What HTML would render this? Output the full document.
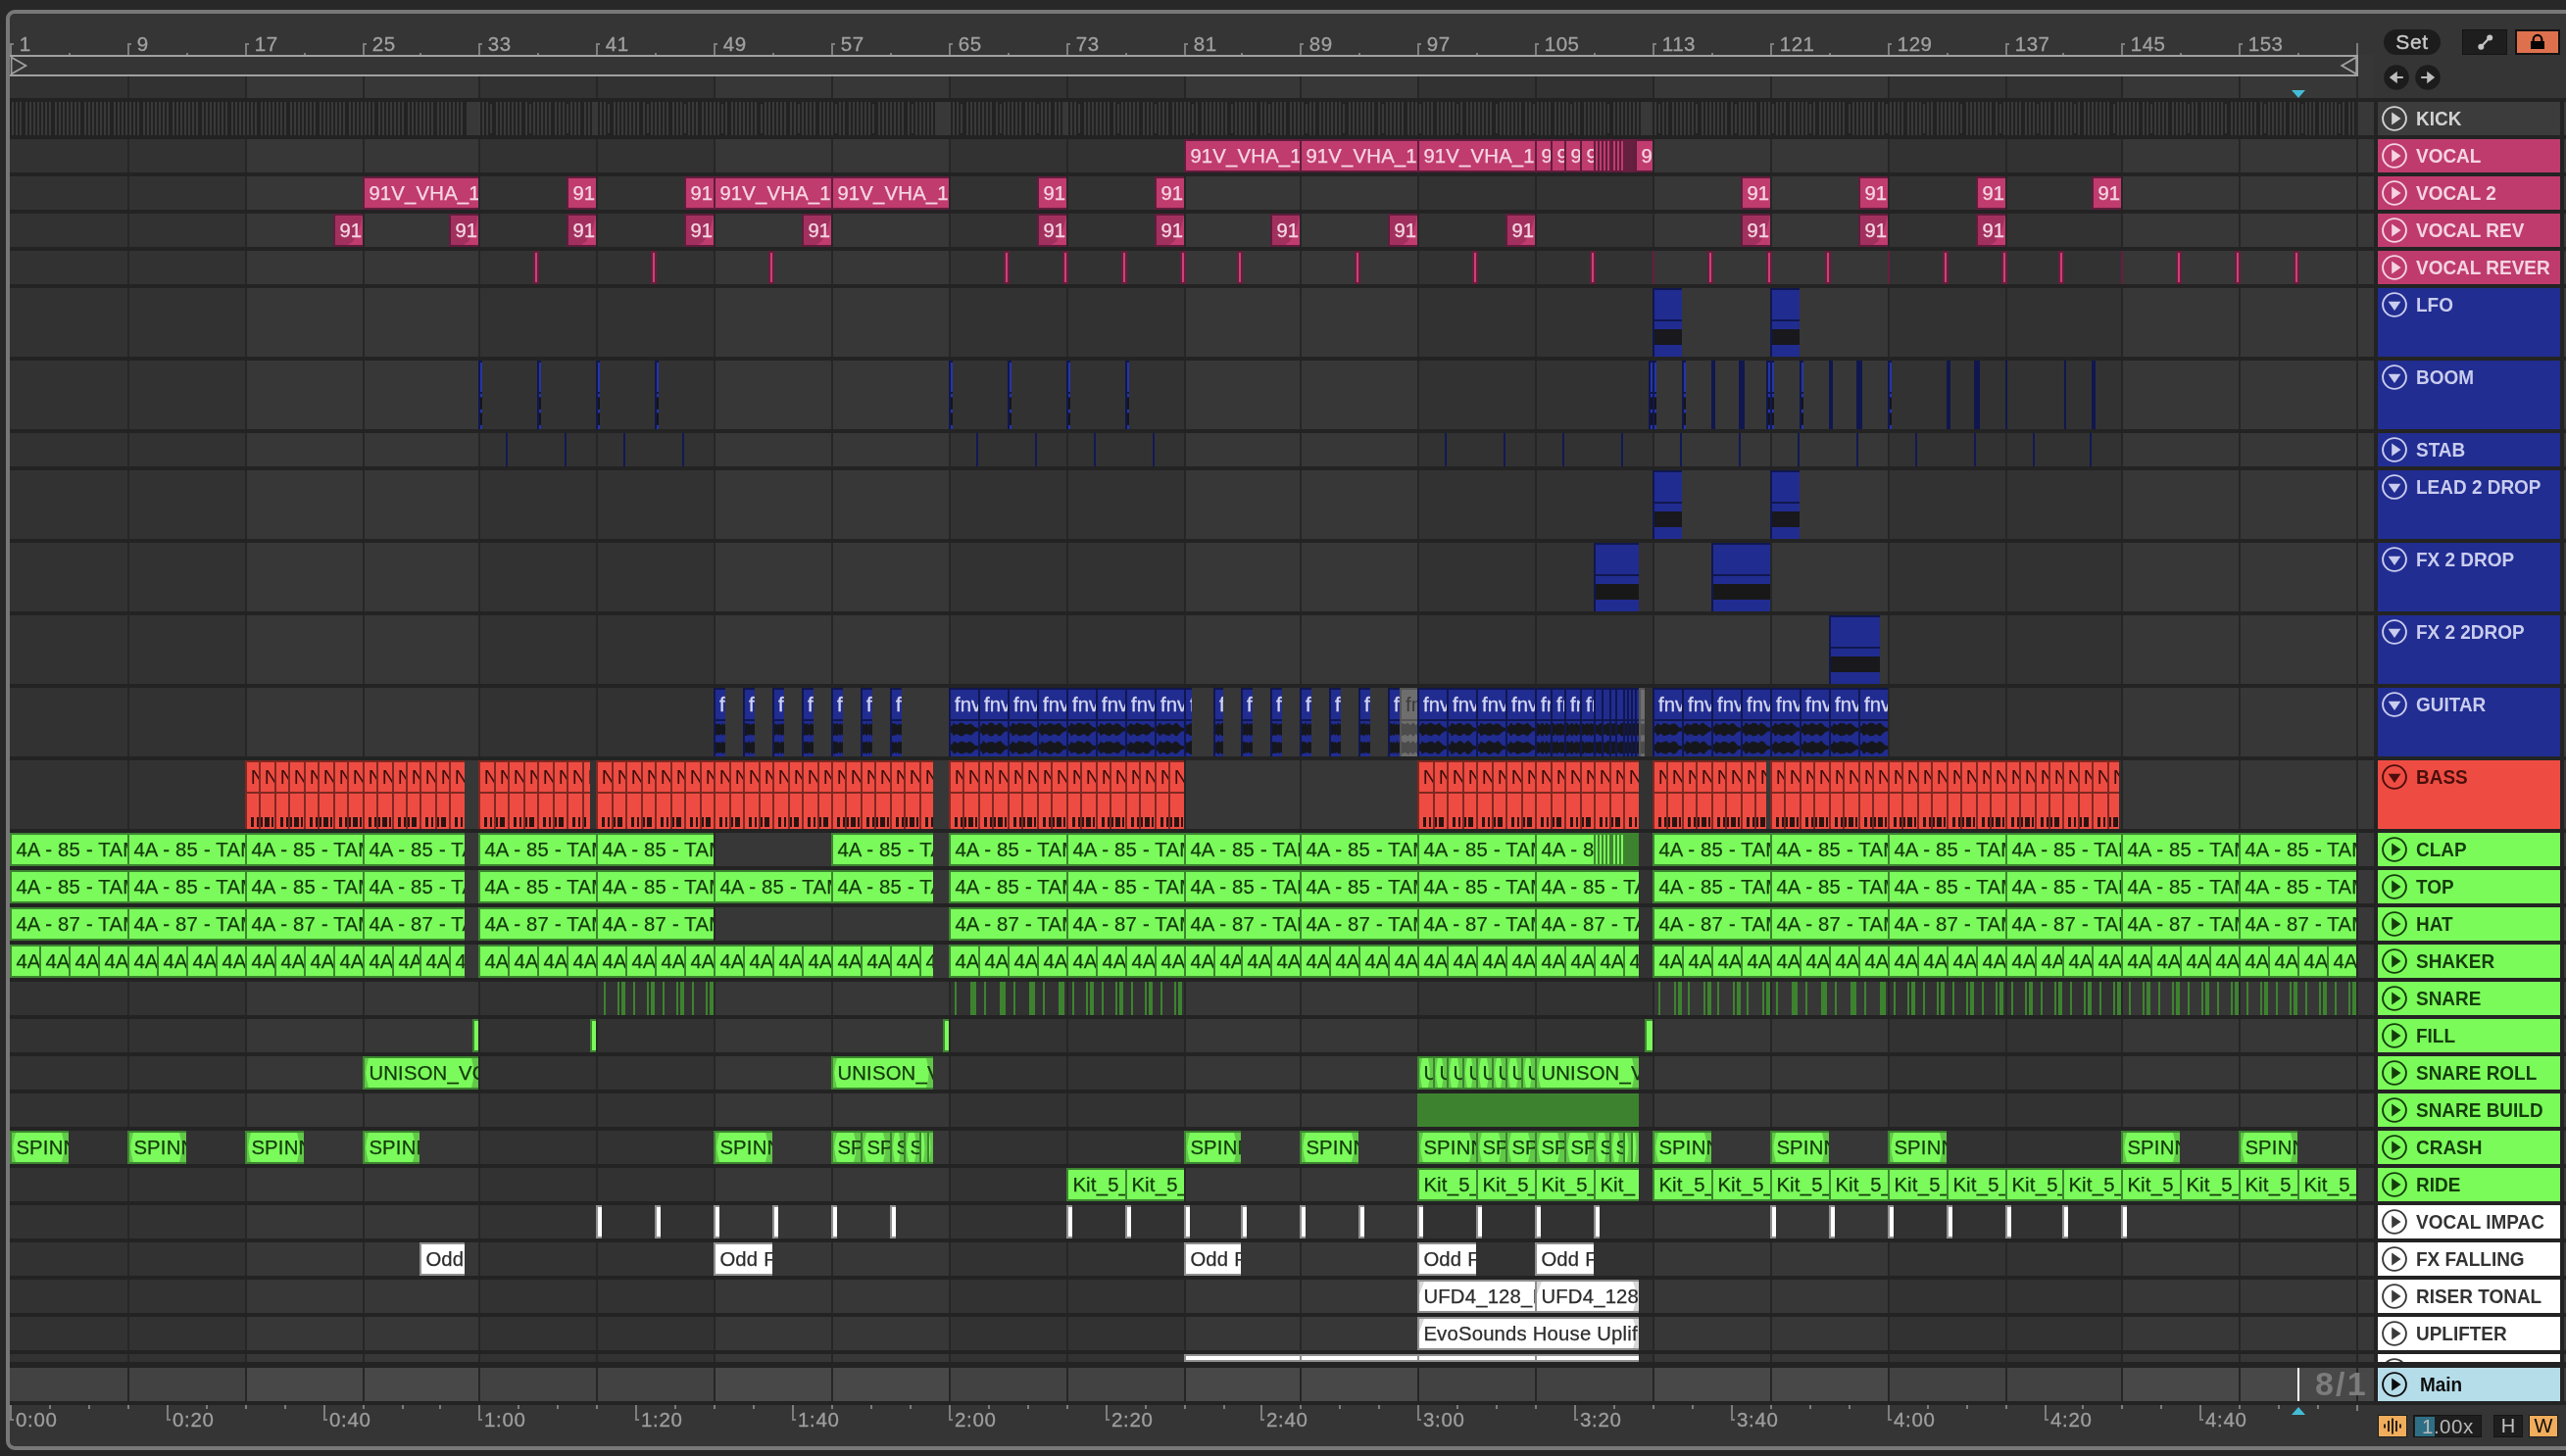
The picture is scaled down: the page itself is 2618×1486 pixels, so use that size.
<!DOCTYPE html><html><head><meta charset="utf-8"><title>Arrangement</title><style>
*{margin:0;padding:0}
html,body{width:2618px;height:1486px;overflow:hidden;background:#282828}
body{position:relative;font-family:"Liberation Sans",sans-serif}
div,i,b,u,s,svg{position:absolute;display:block}
#all{left:0;top:0;width:2618px;height:1486px;will-change:transform;overflow:hidden}
#fr{left:6px;top:10px;width:2640px;height:1470px;box-sizing:border-box;border:4px solid #787878;border-radius:9px;background:#353535}
.band{top:78px;height:1312px;background:#323232}
.band2{top:78px;height:1312px;background:#373737}
.gl8{top:78px;width:2px;height:1356px;background:#262626}
.sep{left:10px;width:2608px;height:4px;background:#232323}
.c{overflow:hidden;box-sizing:border-box;white-space:nowrap;font-size:20.3px;letter-spacing:.2px;line-height:30px;padding-left:4.4px;border:2px solid;border-right:0;-webkit-text-stroke:.25px}
.pk{background:#c03b6e;border-color:#5f1d3d;color:#f5d6e2}
.pkd{background:#651f3f;border-color:#651f3f}
.pkr{background:#a2305e;border-color:#5f1d3d;color:#f5d6e2}
.fd{left:0;top:0;width:100%;height:100%;background:#c03b6e;clip-path:polygon(100% 100%,46% 100%,64% 88%,80% 64%,92% 32%,100% 0);z-index:0}
.pkr,.gr,.wh{z-index:0}.pkr .fd{z-index:-1}
.pkt{width:6px;height:34px;background:#c94375;box-sizing:border-box;border:2px solid #681d3e}
.pkt2{width:2px;height:34px;background:#681d3e}
.kbg{background:#222}
.kick{background-color:#222;background-image:repeating-linear-gradient(90deg,#3c3c3c 0,#3c3c3c 1.9px,#222 1.9px,#222 3.74px)}
.kgap{background:#383838}
.mb{height:70px;background:#212c90;box-sizing:border-box;border-left:2px solid #10174f;border-top:2px solid #10174f;overflow:hidden}
.mb b{left:0;top:30px;width:100%;height:2px;background:#10174f}
.mb u{left:0;top:40px;width:100%;height:16px}
.bh{height:70px;background:#2636a6;box-sizing:border-box;border-left:2px solid #10174f;border-top:2px solid #10174f;overflow:hidden}
.bh b{left:0;top:30px;width:100%;height:2px;background:#10174f}
.bh s{left:-1px;top:35px;width:4px;height:13px;border-radius:50%;background:#14141c}
.bn{height:70px;background:#10174f}
.st{width:2px;height:34px;background:#121955}
.ga,.gg{height:70px;background:#212c90;box-sizing:border-box;border-left:2px solid #10174f;border-top:2px solid #10174f;overflow:hidden;white-space:nowrap}
.ga b,.gg b{left:4px;top:0;font-weight:normal;font-size:20.3px;letter-spacing:.1px;line-height:30px;color:#d3d6f2;-webkit-text-stroke:.35px #d3d6f2}
.ga:after,.gg:after{content:"";position:absolute;left:0;top:30px;width:100%;height:2px;background:#10174f}
.gg{background:#6e6e6e;border-color:#555}.gg b{color:#3a3a3a;-webkit-text-stroke:0}.gg:after{background:#555}
.wv{left:0;top:32px}
.ba{height:70px;background:#ee4c42;box-sizing:border-box;border-left:2px solid #7f2822;border-top:2px solid #7f2822;overflow:hidden}
.ba b{left:3.8px;top:0;font-weight:normal;font-size:20.3px;line-height:30px;color:#3c0d0a}
.ba:after{content:"";position:absolute;left:0;top:30px;width:100%;height:2px;background:#7f2822}
.ba i{top:56px;height:10px;background:#2a1411}
.gr{background:#7bfa5b;border-color:#3c8530;color:#133a0b}
.grd{background:#3d832f;border-color:#3d832f}
.grs{background:transparent;border:0;border-left:1px solid #3d8631}
.sn{height:34px;background:#3d832f}
.gl{left:0;top:0;width:4px;height:100%;background:#62c849;z-index:-1;clip-path:polygon(0 0,100% 0,55% 25%,30% 50%,55% 75%,100% 100%,0 100%)}
.gr2{right:0;top:0;width:7px;height:100%;background:#62c849;z-index:-1;clip-path:polygon(0 0,100% 0,100% 100%,0 100%,25% 75%,38% 50%,25% 25%)}
.wh{background:#fff;border-color:#8f8f8f;color:#2c2c2c}
.wl{left:0;top:0;width:5px;height:100%;background:#d8d8d8;z-index:-1;clip-path:polygon(0 0,100% 0,0 45%)}
.wr{right:0;top:0;width:6px;height:100%;background:#d8d8d8;z-index:-1;clip-path:polygon(0 0,100% 0,100% 100%,0 100%,40% 75%,60% 50%,40% 25%)}
.hd{left:2426px;width:186px;box-sizing:border-box;font-weight:bold;font-size:20.5px;line-height:34px;padding-left:38.5px;white-space:nowrap;overflow:hidden}.hd span{display:inline-block;transform:scaleX(.925);transform-origin:0 50%}
.hd svg{left:4px;top:4px}
.k{background:#3c3c3c;color:#d2d2d2}
.hpk{background:#bf3b6d;color:#f4d4e1}
.hbl{background:#212d91;color:#c9ccee}
.hrd{background:#ee4c42;color:#4a0f0c}
.hgr{background:#7bfb5a;color:#143d0c}
.hwh{background:#fff;color:#333}
.rl{top:33.3px;font-size:20.5px;line-height:24px;color:#a0a0a0;letter-spacing:.5px;-webkit-text-stroke:.3px}
.tl{top:1437px;font-size:20.5px;line-height:24px;color:#9e9e9e;letter-spacing:.7px;-webkit-text-stroke:.3px}
.tk{background:#a1a1a1}.tk2{background:#7d7d7d}
</style></head><body><div id="all">
<div id="fr"></div>
<div class="band" style="left:10px;width:240px"></div>
<div class="band2" style="left:250px;width:238px"></div>
<div class="band" style="left:488px;width:240px"></div>
<div class="band2" style="left:728px;width:240px"></div>
<div class="band" style="left:968px;width:240px"></div>
<div class="band2" style="left:1208px;width:238px"></div>
<div class="band" style="left:1446px;width:240px"></div>
<div class="band2" style="left:1686px;width:240px"></div>
<div class="band" style="left:1926px;width:238px"></div>
<div class="band2" style="left:2164px;width:240px"></div>
<div style="left:2406px;top:100px;width:16px;height:1334px;background:#383838"></div>
<div style="left:2422px;top:100px;width:4px;height:1334px;background:#232323"></div>
<div style="left:2612px;top:100px;width:4px;height:1334px;background:#232323"></div>
<div style="left:2616px;top:100px;width:2px;height:1334px;background:#3a3a3a"></div>
<div style="left:2406px;top:56px;width:16px;height:44px;background:#373737"></div>
<div style="left:10px;top:1396px;width:240px;height:34px;background:#424242"></div>
<div style="left:250px;top:1396px;width:238px;height:34px;background:#484848"></div>
<div style="left:488px;top:1396px;width:240px;height:34px;background:#424242"></div>
<div style="left:728px;top:1396px;width:240px;height:34px;background:#484848"></div>
<div style="left:968px;top:1396px;width:240px;height:34px;background:#424242"></div>
<div style="left:1208px;top:1396px;width:238px;height:34px;background:#484848"></div>
<div style="left:1446px;top:1396px;width:240px;height:34px;background:#424242"></div>
<div style="left:1686px;top:1396px;width:240px;height:34px;background:#484848"></div>
<div style="left:1926px;top:1396px;width:238px;height:34px;background:#424242"></div>
<div style="left:2164px;top:1396px;width:240px;height:34px;background:#484848"></div>
<div style="left:2406px;top:1396px;width:16px;height:34px;background:#474747"></div>
<div class="gl8" style="left:130px"></div>
<div class="gl8" style="left:250px"></div>
<div class="gl8" style="left:370px"></div>
<div class="gl8" style="left:488px"></div>
<div class="gl8" style="left:608px"></div>
<div class="gl8" style="left:728px"></div>
<div class="gl8" style="left:848px"></div>
<div class="gl8" style="left:968px"></div>
<div class="gl8" style="left:1088px"></div>
<div class="gl8" style="left:1208px"></div>
<div class="gl8" style="left:1326px"></div>
<div class="gl8" style="left:1446px"></div>
<div class="gl8" style="left:1566px"></div>
<div class="gl8" style="left:1686px"></div>
<div class="gl8" style="left:1806px"></div>
<div class="gl8" style="left:1926px"></div>
<div class="gl8" style="left:2046px"></div>
<div class="gl8" style="left:2164px"></div>
<div class="gl8" style="left:2284px"></div>
<div class="gl8" style="left:2404px"></div>
<div class="sep" style="top:100px"></div>
<div class="sep" style="top:138px"></div>
<div class="sep" style="top:176px"></div>
<div class="sep" style="top:214px"></div>
<div class="sep" style="top:252px"></div>
<div class="sep" style="top:290px"></div>
<div class="sep" style="top:364px"></div>
<div class="sep" style="top:438px"></div>
<div class="sep" style="top:476px"></div>
<div class="sep" style="top:550px"></div>
<div class="sep" style="top:624px"></div>
<div class="sep" style="top:698px"></div>
<div class="sep" style="top:772px"></div>
<div class="sep" style="top:846px"></div>
<div class="sep" style="top:884px"></div>
<div class="sep" style="top:922px"></div>
<div class="sep" style="top:960px"></div>
<div class="sep" style="top:998px"></div>
<div class="sep" style="top:1036px"></div>
<div class="sep" style="top:1074px"></div>
<div class="sep" style="top:1112px"></div>
<div class="sep" style="top:1150px"></div>
<div class="sep" style="top:1188px"></div>
<div class="sep" style="top:1226px"></div>
<div class="sep" style="top:1264px"></div>
<div class="sep" style="top:1302px"></div>
<div class="sep" style="top:1340px"></div>
<div class="sep" style="top:1378px"></div>
<div class="sep" style="top:1390px;height:6px"></div>
<div class="sep" style="top:1430px;height:4px"></div>
<div class="kbg" style="left:10px;top:100px;width:2394px;height:42px"></div>
<svg style="left:0;top:0" width="2410" height="140" viewBox="0 0 2410 140" shape-rendering="crispEdges"><path d="M13 104v34M17 104v34M21 104v34M27 104v34M31 104v34M35 104v34M39 104v34M43 104v34M47 104v34M51 104v34M57 104v34M61 104v34M65 104v34M69 104v34M73 104v34M77 104v34M81 104v34M87 104v34M91 104v34M95 104v34M99 104v34M103 104v34M107 104v34M111 104v34M117 104v34M121 104v34M125 104v34M129 104v34M133 104v34M137 104v34M141 104v34M147 104v34M151 104v34M155 104v34M159 104v34M163 104v34M167 104v34M171 104v34M177 104v34M181 104v34M185 104v34M189 104v34M193 104v34M197 104v34M201 104v34M207 104v34M211 104v34M215 104v34M219 104v34M223 104v34M227 104v34M231 104v34M237 104v34M241 104v34M245 104v34M249 104v34M253 104v34M257 104v34M261 104v34M267 104v34M271 104v34M275 104v34M279 104v34M283 104v34M287 104v34M291 104v34M297 104v34M301 104v34M305 104v34M309 104v34M313 104v34M317 104v34M321 104v34M327 104v34M331 104v34M335 104v34M339 104v34M343 104v34M347 104v34M351 104v34M357 104v34M361 104v34M365 104v34M369 104v34M373 104v34M377 104v34M381 104v34M387 104v34M391 104v34M395 104v34M399 104v34M403 104v34M407 104v34M411 104v34M417 104v34M421 104v34M425 104v34M429 104v34M433 104v34M437 104v34M441 104v34M447 104v34M451 104v34M455 104v34M459 104v34M463 104v34M467 104v34M471 104v34M489 104v34M493 104v34M497 104v34M501 106v30M507 104v34M511 104v34M515 104v34M519 104v34M523 104v34M527 104v34M531 104v34M537 104v34M541 106v30M545 104v34M549 104v34M553 104v34M557 104v34M561 104v34M567 104v34M571 104v34M575 104v34M579 106v30M583 104v34M587 104v34M591 104v34M597 104v34M601 104v34M609 104v34M613 104v34M617 104v34M621 106v30M627 104v34M631 104v34M635 104v34M639 104v34M643 104v34M647 104v34M651 104v34M657 104v34M661 106v30M665 104v34M669 104v34M673 104v34M677 104v34M681 104v34M687 104v34M691 104v34M695 104v34M699 106v30M703 104v34M707 104v34M711 104v34M717 104v34M721 104v34M725 104v34M729 104v34M733 104v34M737 106v30M741 104v34M747 104v34M751 104v34M755 104v34M759 104v34M763 104v34M767 104v34M771 104v34M777 106v30M781 104v34M785 104v34M789 104v34M793 104v34M797 104v34M801 104v34M807 104v34M811 104v34M815 106v30M819 104v34M823 104v34M827 104v34M831 104v34M837 104v34M841 104v34M845 104v34M849 104v34M853 106v30M857 104v34M861 104v34M867 104v34M871 104v34M875 104v34M879 104v34M883 104v34M887 104v34M891 106v30M897 104v34M901 104v34M905 104v34M909 104v34M913 104v34M917 104v34M921 104v34M927 104v34M931 106v30M935 104v34M939 104v34M943 104v34M947 104v34M951 104v34M969 104v34M973 104v34M977 104v34M981 106v30M987 104v34M991 104v34M995 104v34M999 104v34M1003 104v34M1007 104v34M1011 104v34M1017 104v34M1021 106v30M1025 104v34M1029 104v34M1033 104v34M1037 104v34M1041 104v34M1047 104v34M1051 104v34M1055 104v34M1059 106v30M1063 104v34M1067 104v34M1071 104v34M1077 104v34M1081 104v34M1089 104v34M1093 104v34M1097 104v34M1101 106v30M1107 104v34M1111 104v34M1115 104v34M1119 104v34M1123 104v34M1127 104v34M1131 104v34M1137 104v34M1141 106v30M1145 104v34M1149 104v34M1153 104v34M1157 104v34M1161 104v34M1167 104v34M1171 104v34M1175 104v34M1179 106v30M1183 104v34M1187 104v34M1191 104v34M1197 104v34M1201 104v34M1205 104v34M1209 104v34M1213 104v34M1217 106v30M1221 104v34M1227 104v34M1231 104v34M1235 104v34M1239 104v34M1243 104v34M1247 104v34M1251 104v34M1257 106v30M1261 104v34M1265 104v34M1269 104v34M1273 104v34M1277 104v34M1281 104v34M1287 104v34M1291 104v34M1295 106v30M1299 104v34M1303 104v34M1307 104v34M1311 104v34M1317 104v34M1321 104v34M1325 104v34M1329 104v34M1333 106v30M1337 104v34M1341 104v34M1347 104v34M1351 104v34M1355 104v34M1359 104v34M1363 104v34M1367 104v34M1371 106v30M1377 104v34M1381 104v34M1385 104v34M1389 104v34M1393 104v34M1397 104v34M1401 104v34M1407 104v34M1411 106v30M1415 104v34M1419 104v34M1423 104v34M1427 104v34M1431 104v34M1437 104v34M1441 104v34M1445 104v34M1449 106v30M1453 104v34M1457 104v34M1461 104v34M1467 104v34M1471 104v34M1475 104v34M1479 104v34M1483 104v34M1487 106v30M1491 104v34M1497 104v34M1501 104v34M1505 104v34M1509 104v34M1513 104v34M1517 104v34M1521 104v34M1527 106v30M1531 104v34M1535 104v34M1539 104v34M1543 104v34M1547 104v34M1551 104v34M1557 104v34M1561 104v34M1565 106v30M1569 104v34M1573 104v34M1577 104v34M1581 104v34M1587 104v34M1591 104v34M1595 104v34M1599 104v34M1603 106v30M1607 104v34M1611 104v34M1617 104v34M1621 104v34M1625 104v34M1629 104v34M1633 104v34M1637 104v34M1641 106v30M1647 104v34M1651 104v34M1655 104v34M1659 104v34M1663 104v34M1667 104v34M1671 104v34M1689 104v34M1693 106v30M1697 104v34M1701 104v34M1707 104v34M1711 104v34M1715 104v34M1719 104v34M1723 104v34M1727 104v34M1731 106v30M1737 104v34M1741 104v34M1745 104v34M1749 104v34M1753 104v34M1757 104v34M1761 104v34M1767 104v34M1771 106v30M1775 104v34M1779 104v34M1783 104v34M1787 104v34M1791 104v34M1797 104v34M1801 104v34M1805 104v34M1809 106v30M1813 104v34M1817 104v34M1821 104v34M1827 104v34M1831 104v34M1835 104v34M1839 104v34M1843 104v34M1847 106v30M1851 104v34M1857 104v34M1861 104v34M1865 104v34M1869 104v34M1873 104v34M1877 104v34M1881 104v34M1887 106v30M1891 104v34M1895 104v34M1899 104v34M1903 104v34M1907 104v34M1911 104v34M1917 104v34M1921 104v34M1925 106v30M1929 104v34M1933 104v34M1937 104v34M1941 104v34M1947 104v34M1951 104v34M1955 104v34M1959 104v34M1963 106v30M1967 104v34M1971 104v34M1977 104v34M1981 104v34M1985 104v34M1989 104v34M1993 104v34M1997 104v34M2001 106v30M2007 104v34M2011 104v34M2015 104v34M2019 104v34M2023 104v34M2027 104v34M2031 104v34M2037 104v34M2041 106v30M2045 104v34M2049 104v34M2053 104v34M2057 104v34M2061 104v34M2067 104v34M2071 104v34M2075 104v34M2079 106v30M2083 104v34M2087 104v34M2091 104v34M2097 104v34M2101 104v34M2105 104v34M2109 104v34M2113 104v34M2117 106v30M2121 104v34M2127 104v34M2131 104v34M2135 104v34M2139 104v34M2143 104v34M2147 104v34M2151 104v34M2157 106v30M2161 104v34M2165 104v34M2169 104v34M2173 104v34M2177 104v34M2181 104v34M2187 104v34M2191 104v34M2195 106v30M2199 104v34M2203 104v34M2207 104v34M2211 104v34M2217 104v34M2221 104v34M2225 104v34M2229 104v34M2233 106v30M2237 104v34M2241 104v34M2247 104v34M2251 104v34M2255 104v34M2259 104v34M2263 104v34M2267 104v34M2271 106v30M2277 104v34M2281 104v34M2285 104v34M2289 104v34M2293 104v34M2297 104v34M2301 104v34M2307 104v34M2311 106v30M2315 104v34M2319 104v34M2323 104v34M2327 104v34M2331 104v34M2337 104v34M2341 104v34M2345 104v34M2349 106v30M2353 104v34M2357 104v34M2361 104v34M2367 104v34M2371 104v34M2375 104v34M2379 104v34M2383 104v34M2387 106v30M2391 104v34M2397 104v34M2401 104v34" stroke="#393939" stroke-width="2" fill="none"/></svg>
<div class="kgap" style="left:476px;top:104px;width:12px;height:34px"></div>
<div class="kgap" style="left:604px;top:104px;width:4px;height:34px"></div>
<div class="kgap" style="left:954px;top:104px;width:14px;height:34px"></div>
<div class="kgap" style="left:1084px;top:104px;width:4px;height:34px"></div>
<div class="kgap" style="left:1674px;top:104px;width:12px;height:34px"></div>
<div class="c pk" style="left:1208px;top:142px;width:118px;height:34px;">91V_VHA_1</div>
<div class="c pk" style="left:1326px;top:142px;width:120px;height:34px;">91V_VHA_1</div>
<div class="c pk" style="left:1446px;top:142px;width:120px;height:34px;">91V_VHA_1</div>
<div class="c pk" style="left:1566px;top:142px;width:16px;height:34px;">9</div>
<div class="c pk" style="left:1582px;top:142px;width:14px;height:34px;">9</div>
<div class="c pk" style="left:1596px;top:142px;width:16px;height:34px;">9</div>
<div class="c pk" style="left:1612px;top:142px;width:14px;height:34px;">9</div>
<div class="c pk" style="left:1626px;top:142px;width:4px;height:34px;;padding:0"></div>
<div class="c pk" style="left:1630px;top:142px;width:4px;height:34px;;padding:0"></div>
<div class="c pk" style="left:1634px;top:142px;width:4px;height:34px;;padding:0"></div>
<div class="c pk" style="left:1638px;top:142px;width:4px;height:34px;;padding:0"></div>
<div class="c pk" style="left:1644px;top:142px;width:4px;height:34px;;padding:0"></div>
<div class="c pk" style="left:1648px;top:142px;width:4px;height:34px;;padding:0"></div>
<div class="c pk" style="left:1652px;top:142px;width:4px;height:34px;;padding:0"></div>
<div class="c pkd" style="left:1642px;top:142px;width:2px;height:34px;;padding:0"></div>
<div class="c pkd" style="left:1656px;top:142px;width:12px;height:34px;;padding:0"></div>
<div class="c pk" style="left:1668px;top:142px;width:18px;height:34px;">9</div>
<div class="c pk" style="left:370px;top:180px;width:118px;height:34px;">91V_VHA_1</div>
<div class="c pk" style="left:728px;top:180px;width:120px;height:34px;">91V_VHA_1</div>
<div class="c pk" style="left:848px;top:180px;width:120px;height:34px;">91V_VHA_1</div>
<div class="c pk" style="left:578px;top:180px;width:30px;height:34px;">91</div>
<div class="c pk" style="left:698px;top:180px;width:30px;height:34px;">91</div>
<div class="c pk" style="left:1058px;top:180px;width:30px;height:34px;">91</div>
<div class="c pk" style="left:1178px;top:180px;width:30px;height:34px;">91</div>
<div class="c pk" style="left:1776px;top:180px;width:30px;height:34px;">91</div>
<div class="c pk" style="left:1896px;top:180px;width:30px;height:34px;">91</div>
<div class="c pk" style="left:2016px;top:180px;width:30px;height:34px;">91</div>
<div class="c pk" style="left:2134px;top:180px;width:30px;height:34px;">91</div>
<div class="c pkr" style="left:340px;top:218px;width:30px;height:34px;"><i class="fd"></i>91</div>
<div class="c pkr" style="left:458px;top:218px;width:30px;height:34px;"><i class="fd"></i>91</div>
<div class="c pkr" style="left:578px;top:218px;width:30px;height:34px;"><i class="fd"></i>91</div>
<div class="c pkr" style="left:698px;top:218px;width:30px;height:34px;"><i class="fd"></i>91</div>
<div class="c pkr" style="left:818px;top:218px;width:30px;height:34px;"><i class="fd"></i>91</div>
<div class="c pkr" style="left:1058px;top:218px;width:30px;height:34px;"><i class="fd"></i>91</div>
<div class="c pkr" style="left:1178px;top:218px;width:30px;height:34px;"><i class="fd"></i>91</div>
<div class="c pkr" style="left:1296px;top:218px;width:30px;height:34px;"><i class="fd"></i>91</div>
<div class="c pkr" style="left:1416px;top:218px;width:30px;height:34px;"><i class="fd"></i>91</div>
<div class="c pkr" style="left:1536px;top:218px;width:30px;height:34px;"><i class="fd"></i>91</div>
<div class="c pkr" style="left:1776px;top:218px;width:30px;height:34px;"><i class="fd"></i>91</div>
<div class="c pkr" style="left:1896px;top:218px;width:30px;height:34px;"><i class="fd"></i>91</div>
<div class="c pkr" style="left:2016px;top:218px;width:30px;height:34px;"><i class="fd"></i>91</div>
<div class="pkt" style="left:544px;top:256px"></div>
<div class="pkt" style="left:664px;top:256px"></div>
<div class="pkt" style="left:784px;top:256px"></div>
<div class="pkt" style="left:1024px;top:256px"></div>
<div class="pkt" style="left:1084px;top:256px"></div>
<div class="pkt" style="left:1144px;top:256px"></div>
<div class="pkt" style="left:1204px;top:256px"></div>
<div class="pkt" style="left:1262px;top:256px"></div>
<div class="pkt" style="left:1382px;top:256px"></div>
<div class="pkt" style="left:1502px;top:256px"></div>
<div class="pkt" style="left:1622px;top:256px"></div>
<div class="pkt2" style="left:1686px;top:256px"></div>
<div class="pkt" style="left:1742px;top:256px"></div>
<div class="pkt" style="left:1802px;top:256px"></div>
<div class="pkt" style="left:1862px;top:256px"></div>
<div class="pkt2" style="left:1926px;top:256px"></div>
<div class="pkt" style="left:1982px;top:256px"></div>
<div class="pkt" style="left:2042px;top:256px"></div>
<div class="pkt" style="left:2100px;top:256px"></div>
<div class="pkt2" style="left:2164px;top:256px"></div>
<div class="pkt" style="left:2220px;top:256px"></div>
<div class="pkt" style="left:2280px;top:256px"></div>
<div class="pkt" style="left:2340px;top:256px"></div>
<div class="mb" style="left:1686px;top:294px;width:30px"><b></b><u style="background:#18181d"></u></div>
<div class="mb" style="left:1686px;top:480px;width:30px"><b></b><u style="background:#18181d"></u></div>
<div class="mb" style="left:1806px;top:294px;width:30px"><b></b><u style="background:#18181d"></u></div>
<div class="mb" style="left:1806px;top:480px;width:30px"><b></b><u style="background:#18181d"></u></div>
<div class="mb" style="left:1626px;top:554px;width:46px"><b></b><u style="background:#181818"></u></div>
<div class="mb" style="left:1746px;top:554px;width:60px"><b></b><u style="background:#181818"></u></div>
<div class="mb" style="left:1866px;top:628px;width:52px"><b></b><u style="background:#18181d"></u></div>
<div class="bh" style="left:488px;top:368px;width:4px"><b></b><u></u><s></s><s style="top:51px"></s></div>
<div class="bh" style="left:548px;top:368px;width:4px"><b></b><u></u><s></s><s style="top:51px"></s></div>
<div class="bh" style="left:608px;top:368px;width:4px"><b></b><u></u><s></s><s style="top:51px"></s></div>
<div class="bh" style="left:668px;top:368px;width:4px"><b></b><u></u><s></s><s style="top:51px"></s></div>
<div class="bh" style="left:968px;top:368px;width:4px"><b></b><u></u><s></s><s style="top:51px"></s></div>
<div class="bh" style="left:1028px;top:368px;width:4px"><b></b><u></u><s></s><s style="top:51px"></s></div>
<div class="bh" style="left:1088px;top:368px;width:4px"><b></b><u></u><s></s><s style="top:51px"></s></div>
<div class="bh" style="left:1148px;top:368px;width:4px"><b></b><u></u><s></s><s style="top:51px"></s></div>
<div class="bh" style="left:1682px;top:368px;width:4px"><b></b><u></u><s></s><s style="top:51px"></s></div>
<div class="bh" style="left:1686px;top:368px;width:4px"><b></b><u></u><s></s><s style="top:51px"></s></div>
<div class="bh" style="left:1716px;top:368px;width:4px"><b></b><u></u><s></s><s style="top:51px"></s></div>
<div class="bh" style="left:1802px;top:368px;width:4px"><b></b><u></u><s></s><s style="top:51px"></s></div>
<div class="bh" style="left:1806px;top:368px;width:4px"><b></b><u></u><s></s><s style="top:51px"></s></div>
<div class="bh" style="left:1836px;top:368px;width:4px"><b></b><u></u><s></s><s style="top:51px"></s></div>
<div class="bh" style="left:1926px;top:368px;width:4px"><b></b><u></u><s></s><s style="top:51px"></s></div>
<div class="bn" style="left:1746px;top:368px;width:4px"></div>
<div class="bn" style="left:1774px;top:368px;width:6px"></div>
<div class="bn" style="left:1866px;top:368px;width:4px"></div>
<div class="bn" style="left:1894px;top:368px;width:6px"></div>
<div class="bn" style="left:1986px;top:368px;width:4px"></div>
<div class="bn" style="left:2014px;top:368px;width:6px"></div>
<div class="bn" style="left:2046px;top:368px;width:2px"></div>
<div class="bn" style="left:2106px;top:368px;width:2px"></div>
<div class="bn" style="left:2134px;top:368px;width:4px"></div>
<div class="st" style="left:516px;top:442px"></div>
<div class="st" style="left:576px;top:442px"></div>
<div class="st" style="left:636px;top:442px"></div>
<div class="st" style="left:696px;top:442px"></div>
<div class="st" style="left:996px;top:442px"></div>
<div class="st" style="left:1056px;top:442px"></div>
<div class="st" style="left:1116px;top:442px"></div>
<div class="st" style="left:1176px;top:442px"></div>
<div class="st" style="left:1474px;top:442px"></div>
<div class="st" style="left:1534px;top:442px"></div>
<div class="st" style="left:1594px;top:442px"></div>
<div class="st" style="left:1654px;top:442px"></div>
<div class="st" style="left:1714px;top:442px"></div>
<div class="st" style="left:1774px;top:442px"></div>
<div class="st" style="left:1834px;top:442px"></div>
<div class="st" style="left:1894px;top:442px"></div>
<div class="st" style="left:1954px;top:442px"></div>
<div class="st" style="left:2014px;top:442px"></div>
<div class="st" style="left:2074px;top:442px"></div>
<div class="st" style="left:2132px;top:442px"></div>
<div class="ga" style="left:728px;top:702px;width:12px"><b>fnv</b><svg class="wv" width="10" height="36" viewBox="0 0 10 36"><path fill="#16171d" d="M0 2.6L1.4 2.8L2.9 3.1L4.3 2.5L5.7 4.2L7.1 2.1L8.6 3.9L10 2.3L10 14.7L8.6 13.1L7.1 14.9L5.7 12.8L4.3 14.5L2.9 13.9L1.4 14.2L0 14.4ZM0 21.5L1.4 21L2.9 22.2L4.3 21L5.7 22.8L7.1 20L8.6 22.3L10 21.1L10 32.9L8.6 31.7L7.1 34L5.7 31.2L4.3 33L2.9 31.8L1.4 33L0 32.5Z"/></svg></div>
<div class="ga" style="left:758px;top:702px;width:12px"><b>fnv</b><svg class="wv" width="10" height="36" viewBox="0 0 10 36"><path fill="#16171d" d="M0 2.3L1.4 1.9L2.9 3.2L4.3 2.1L5.7 3.9L7.1 2.5L8.6 3.1L10 2.5L10 14.5L8.6 13.9L7.1 14.5L5.7 13.1L4.3 14.9L2.9 13.8L1.4 15.1L0 14.7ZM0 21.3L1.4 21.4L2.9 21.9L4.3 20L5.7 23L7.1 20.3L8.6 21.8L10 20.9L10 33.1L8.6 32.2L7.1 33.7L5.7 31L4.3 34L2.9 32.1L1.4 32.6L0 32.7Z"/></svg></div>
<div class="ga" style="left:788px;top:702px;width:12px"><b>fnv</b><svg class="wv" width="10" height="36" viewBox="0 0 10 36"><path fill="#16171d" d="M0 2.3L1.4 3L2.9 3.7L4.3 2.3L5.7 4.1L7.1 2L8.6 3.6L10 2.2L10 14.8L8.6 13.4L7.1 15L5.7 12.9L4.3 14.7L2.9 13.3L1.4 14L0 14.7ZM0 21L1.4 21.2L2.9 21.4L4.3 20.2L5.7 23L7.1 20.3L8.6 21.9L10 20.3L10 33.7L8.6 32.1L7.1 33.7L5.7 31L4.3 33.8L2.9 32.6L1.4 32.8L0 33Z"/></svg></div>
<div class="ga" style="left:818px;top:702px;width:12px"><b>fnv</b><svg class="wv" width="10" height="36" viewBox="0 0 10 36"><path fill="#16171d" d="M0 2.1L1.4 2.7L2.9 2.7L4.3 2.4L5.7 4.3L7.1 1.6L8.6 3.8L10 2.3L10 14.7L8.6 13.2L7.1 15.4L5.7 12.7L4.3 14.6L2.9 14.3L1.4 14.3L0 14.9ZM0 21.5L1.4 20.7L2.9 21.5L4.3 20.3L5.7 22.5L7.1 20.6L8.6 21.7L10 20.7L10 33.3L8.6 32.3L7.1 33.4L5.7 31.5L4.3 33.7L2.9 32.5L1.4 33.3L0 32.5Z"/></svg></div>
<div class="ga" style="left:848px;top:702px;width:12px"><b>fnv</b><svg class="wv" width="10" height="36" viewBox="0 0 10 36"><path fill="#16171d" d="M0 2.3L1.4 2.5L2.9 2.9L4.3 1.4L5.7 4.3L7.1 1.7L8.6 3.9L10 2L10 15L8.6 13.1L7.1 15.3L5.7 12.7L4.3 15.6L2.9 14.1L1.4 14.5L0 14.7ZM0 20.7L1.4 20.3L2.9 21.4L4.3 20.7L5.7 22.9L7.1 20.2L8.6 22.4L10 20.8L10 33.2L8.6 31.6L7.1 33.8L5.7 31.1L4.3 33.3L2.9 32.6L1.4 33.7L0 33.3Z"/></svg></div>
<div class="ga" style="left:878px;top:702px;width:12px"><b>fnv</b><svg class="wv" width="10" height="36" viewBox="0 0 10 36"><path fill="#16171d" d="M0 2.8L1.4 2.9L2.9 3.7L4.3 1.6L5.7 4.6L7.1 2.2L8.6 3.5L10 1.8L10 15.2L8.6 13.5L7.1 14.8L5.7 12.4L4.3 15.4L2.9 13.3L1.4 14.1L0 14.2ZM0 21.4L1.4 21L2.9 21.7L4.3 19.9L5.7 22.5L7.1 19.9L8.6 22.2L10 20.9L10 33.1L8.6 31.8L7.1 34.1L5.7 31.5L4.3 34.1L2.9 32.3L1.4 33L0 32.6Z"/></svg></div>
<div class="ga" style="left:908px;top:702px;width:12px"><b>fnv</b><svg class="wv" width="10" height="36" viewBox="0 0 10 36"><path fill="#16171d" d="M0 2.6L1.4 2L2.9 2.8L4.3 2.4L5.7 4.5L7.1 2.2L8.6 3.7L10 2.3L10 14.7L8.6 13.3L7.1 14.8L5.7 12.5L4.3 14.6L2.9 14.2L1.4 15L0 14.4ZM0 20.8L1.4 21.2L2.9 22.2L4.3 20.5L5.7 22.9L7.1 20.3L8.6 21.5L10 20.6L10 33.4L8.6 32.5L7.1 33.7L5.7 31.1L4.3 33.5L2.9 31.8L1.4 32.8L0 33.2Z"/></svg></div>
<div class="ga" style="left:968px;top:702px;width:30px"><b>fnv</b><svg class="wv" width="28" height="36" viewBox="0 0 28 36"><path fill="#16171d" d="M0 5.1L1.5 4.8L2.9 1.8L4.4 3.2L5.9 3.4L7.4 3.5L8.8 2.2L10.3 1.6L11.8 2L13.3 2.6L14.7 3.8L16.2 4L17.7 3.4L19.2 2.7L20.6 2.5L22.1 3.7L23.6 5L25.1 6.5L26.5 6.6L28 7.1L28 9.9L26.5 10.4L25.1 10.5L23.6 12L22.1 13.3L20.6 14.5L19.2 14.3L17.7 13.6L16.2 13L14.7 13.2L13.3 14.4L11.8 15L10.3 15.4L8.8 14.8L7.4 13.5L5.9 13.6L4.4 13.8L2.9 15.2L1.5 12.2L0 11.9ZM0 23.9L1.5 23.5L2.9 21.1L4.4 20.7L5.9 22.2L7.4 22.6L8.8 21.4L10.3 20.7L11.8 20.6L13.3 21.4L14.7 21.6L16.2 22.2L17.7 21.5L19.2 20.6L20.6 21.2L22.1 22.3L23.6 23.5L25.1 24.9L26.5 24.8L28 25.6L28 28.4L26.5 29.2L25.1 29.1L23.6 30.5L22.1 31.7L20.6 32.8L19.2 33.4L17.7 32.5L16.2 31.8L14.7 32.4L13.3 32.6L11.8 33.4L10.3 33.3L8.8 32.6L7.4 31.4L5.9 31.8L4.4 33.3L2.9 32.9L1.5 30.5L0 30.1Z"/></svg></div>
<div class="ga" style="left:998px;top:702px;width:30px"><b>fnv</b><svg class="wv" width="28" height="36" viewBox="0 0 28 36"><path fill="#16171d" d="M0 5.5L1.5 4.5L2.9 2L4.4 3.1L5.9 3.7L7.4 4.2L8.8 2.6L10.3 1.4L11.8 1.4L13.3 2.2L14.7 3.7L16.2 4.2L17.7 3.3L19.2 1.8L20.6 2.1L22.1 3.1L23.6 5L25.1 6.4L26.5 6.3L28 6.8L28 10.2L26.5 10.7L25.1 10.6L23.6 12L22.1 13.9L20.6 14.9L19.2 15.2L17.7 13.7L16.2 12.8L14.7 13.3L13.3 14.8L11.8 15.6L10.3 15.6L8.8 14.4L7.4 12.8L5.9 13.3L4.4 13.9L2.9 15L1.5 12.5L0 11.5ZM0 23.4L1.5 23.1L2.9 20.1L4.4 20.9L5.9 22.5L7.4 22.2L8.8 21.3L10.3 21.1L11.8 21L13.3 21.2L14.7 22.2L16.2 22.4L17.7 20.9L19.2 20.7L20.6 20.1L22.1 21.4L23.6 23.1L25.1 24.8L26.5 25.1L28 25.5L28 28.5L26.5 28.9L25.1 29.2L23.6 30.9L22.1 32.6L20.6 33.9L19.2 33.3L17.7 33.1L16.2 31.6L14.7 31.8L13.3 32.8L11.8 33L10.3 32.9L8.8 32.7L7.4 31.8L5.9 31.5L4.4 33.1L2.9 33.9L1.5 30.9L0 30.6Z"/></svg></div>
<div class="ga" style="left:1028px;top:702px;width:30px"><b>fnv</b><svg class="wv" width="28" height="36" viewBox="0 0 28 36"><path fill="#16171d" d="M0 5.3L1.5 5.1L2.9 1.8L4.4 2.2L5.9 3.5L7.4 3.8L8.8 2.5L10.3 1.6L11.8 2.4L13.3 2.2L14.7 3L16.2 3.8L17.7 2.6L19.2 2.1L20.6 2.6L22.1 3.1L23.6 5L25.1 6.1L26.5 6.2L28 7L28 10L26.5 10.8L25.1 10.9L23.6 12L22.1 13.9L20.6 14.4L19.2 14.9L17.7 14.4L16.2 13.2L14.7 14L13.3 14.8L11.8 14.6L10.3 15.4L8.8 14.5L7.4 13.2L5.9 13.5L4.4 14.8L2.9 15.2L1.5 11.9L0 11.7ZM0 23.7L1.5 23L2.9 20.2L4.4 21.6L5.9 22.6L7.4 22.6L8.8 20.7L10.3 20.1L11.8 20.9L13.3 20.5L14.7 21.5L16.2 22.4L17.7 21.6L19.2 20.6L20.6 21.1L22.1 22.4L23.6 23L25.1 24.7L26.5 24.9L28 25.3L28 28.7L26.5 29.1L25.1 29.3L23.6 31L22.1 31.6L20.6 32.9L19.2 33.4L17.7 32.4L16.2 31.6L14.7 32.5L13.3 33.5L11.8 33.1L10.3 33.9L8.8 33.3L7.4 31.4L5.9 31.4L4.4 32.4L2.9 33.8L1.5 31L0 30.3Z"/></svg></div>
<div class="ga" style="left:1058px;top:702px;width:30px"><b>fnv</b><svg class="wv" width="28" height="36" viewBox="0 0 28 36"><path fill="#16171d" d="M0 5.2L1.5 4.6L2.9 1.6L4.4 3L5.9 4L7.4 3.9L8.8 2.9L10.3 1.9L11.8 2.2L13.3 2.5L14.7 3.8L16.2 3.7L17.7 3.1L19.2 2.2L20.6 2.1L22.1 3L23.6 4.9L25.1 6.1L26.5 6.4L28 6.9L28 10.1L26.5 10.6L25.1 10.9L23.6 12.1L22.1 14L20.6 14.9L19.2 14.8L17.7 13.9L16.2 13.3L14.7 13.2L13.3 14.5L11.8 14.8L10.3 15.1L8.8 14.1L7.4 13.1L5.9 13L4.4 14L2.9 15.4L1.5 12.4L0 11.8ZM0 23.6L1.5 23.7L2.9 20.6L4.4 21.5L5.9 22.7L7.4 22L8.8 21.5L10.3 20.5L11.8 20.1L13.3 20.9L14.7 22.1L16.2 22.6L17.7 21.4L19.2 20.3L20.6 21.2L22.1 21.8L23.6 23.6L25.1 24.9L26.5 24.8L28 25.4L28 28.6L26.5 29.2L25.1 29.1L23.6 30.4L22.1 32.2L20.6 32.8L19.2 33.7L17.7 32.6L16.2 31.4L14.7 31.9L13.3 33.1L11.8 33.9L10.3 33.5L8.8 32.5L7.4 32L5.9 31.3L4.4 32.5L2.9 33.4L1.5 30.3L0 30.4Z"/></svg></div>
<div class="ga" style="left:1088px;top:702px;width:30px"><b>fnv</b><svg class="wv" width="28" height="36" viewBox="0 0 28 36"><path fill="#16171d" d="M0 5.1L1.5 4.7L2.9 1.5L4.4 2.7L5.9 3.7L7.4 3.7L8.8 2.6L10.3 1.7L11.8 2L13.3 2.4L14.7 3.5L16.2 3.7L17.7 2.7L19.2 1.6L20.6 1.6L22.1 3.6L23.6 4.8L25.1 6.1L26.5 6.3L28 7.1L28 9.9L26.5 10.7L25.1 10.9L23.6 12.2L22.1 13.4L20.6 15.4L19.2 15.4L17.7 14.3L16.2 13.3L14.7 13.5L13.3 14.6L11.8 15L10.3 15.3L8.8 14.4L7.4 13.3L5.9 13.3L4.4 14.3L2.9 15.5L1.5 12.3L0 11.9ZM0 23.9L1.5 23.4L2.9 21L4.4 21.5L5.9 22.7L7.4 22.1L8.8 20.8L10.3 20L11.8 20.9L13.3 20.7L14.7 21.8L16.2 22.9L17.7 21L19.2 20L20.6 21L22.1 21.4L23.6 23.5L25.1 24.8L26.5 24.7L28 25.3L28 28.7L26.5 29.3L25.1 29.2L23.6 30.5L22.1 32.6L20.6 33L19.2 34L17.7 33L16.2 31.1L14.7 32.2L13.3 33.3L11.8 33.1L10.3 34L8.8 33.2L7.4 31.9L5.9 31.3L4.4 32.5L2.9 33L1.5 30.6L0 30.1Z"/></svg></div>
<div class="ga" style="left:1118px;top:702px;width:30px"><b>fnv</b><svg class="wv" width="28" height="36" viewBox="0 0 28 36"><path fill="#16171d" d="M0 5.4L1.5 4.9L2.9 2L4.4 2.9L5.9 4.1L7.4 3.9L8.8 2.4L10.3 2.6L11.8 1.8L13.3 2.5L14.7 3.9L16.2 4.2L17.7 2.8L19.2 2.1L20.6 2.7L22.1 2.9L23.6 4.7L25.1 6.1L26.5 6.6L28 7L28 10L26.5 10.4L25.1 10.9L23.6 12.3L22.1 14.1L20.6 14.3L19.2 14.9L17.7 14.2L16.2 12.8L14.7 13.1L13.3 14.5L11.8 15.2L10.3 14.4L8.8 14.6L7.4 13.1L5.9 12.9L4.4 14.1L2.9 15L1.5 12.1L0 11.6ZM0 24L1.5 23.2L2.9 20.8L4.4 21.6L5.9 22.4L7.4 21.8L8.8 20.8L10.3 20.8L11.8 20.9L13.3 20.4L14.7 21.9L16.2 22.4L17.7 21.9L19.2 21.2L20.6 20.4L22.1 22L23.6 23.7L25.1 24.6L26.5 24.9L28 25.4L28 28.6L26.5 29.1L25.1 29.4L23.6 30.3L22.1 32L20.6 33.6L19.2 32.8L17.7 32.1L16.2 31.6L14.7 32.1L13.3 33.6L11.8 33.1L10.3 33.2L8.8 33.2L7.4 32.2L5.9 31.6L4.4 32.4L2.9 33.2L1.5 30.8L0 30Z"/></svg></div>
<div class="ga" style="left:1148px;top:702px;width:30px"><b>fnv</b><svg class="wv" width="28" height="36" viewBox="0 0 28 36"><path fill="#16171d" d="M0 5.4L1.5 4.6L2.9 2.6L4.4 2.3L5.9 3.8L7.4 3.9L8.8 2.6L10.3 1.4L11.8 2.2L13.3 2.9L14.7 3.4L16.2 4.3L17.7 3.4L19.2 2.5L20.6 2.7L22.1 3.7L23.6 5L25.1 6.4L26.5 6.3L28 7L28 10L26.5 10.7L25.1 10.6L23.6 12L22.1 13.3L20.6 14.3L19.2 14.5L17.7 13.6L16.2 12.7L14.7 13.6L13.3 14.1L11.8 14.8L10.3 15.6L8.8 14.4L7.4 13.1L5.9 13.2L4.4 14.7L2.9 14.4L1.5 12.4L0 11.6ZM0 23.6L1.5 23.6L2.9 20.7L4.4 21.7L5.9 22.5L7.4 22.7L8.8 20.9L10.3 20.4L11.8 20.8L13.3 21L14.7 21.5L16.2 22.9L17.7 21.1L19.2 20.7L20.6 20.7L22.1 21.6L23.6 23.5L25.1 24.8L26.5 24.9L28 25.3L28 28.7L26.5 29.1L25.1 29.2L23.6 30.5L22.1 32.4L20.6 33.3L19.2 33.3L17.7 32.9L16.2 31.1L14.7 32.5L13.3 33L11.8 33.2L10.3 33.6L8.8 33.1L7.4 31.3L5.9 31.5L4.4 32.3L2.9 33.3L1.5 30.4L0 30.4Z"/></svg></div>
<div class="ga" style="left:1178px;top:702px;width:30px"><b>fnv</b><svg class="wv" width="28" height="36" viewBox="0 0 28 36"><path fill="#16171d" d="M0 5.3L1.5 4.6L2.9 1.7L4.4 2.5L5.9 3.9L7.4 3.9L8.8 3.2L10.3 2.5L11.8 2.5L13.3 2.1L14.7 3.7L16.2 4.4L17.7 3.4L19.2 1.7L20.6 1.7L22.1 3.2L23.6 5L25.1 6.4L26.5 6.5L28 7L28 10L26.5 10.5L25.1 10.6L23.6 12L22.1 13.8L20.6 15.3L19.2 15.3L17.7 13.6L16.2 12.6L14.7 13.3L13.3 14.9L11.8 14.5L10.3 14.5L8.8 13.8L7.4 13.1L5.9 13.1L4.4 14.5L2.9 15.3L1.5 12.4L0 11.7ZM0 23.9L1.5 23.4L2.9 20.8L4.4 20.6L5.9 21.8L7.4 22.2L8.8 21.4L10.3 19.9L11.8 20.6L13.3 21.1L14.7 22.4L16.2 22.7L17.7 21.4L19.2 20.6L20.6 21L22.1 21.9L23.6 23.7L25.1 24.9L26.5 25.1L28 25.5L28 28.5L26.5 28.9L25.1 29.1L23.6 30.3L22.1 32.1L20.6 33L19.2 33.4L17.7 32.6L16.2 31.3L14.7 31.6L13.3 32.9L11.8 33.4L10.3 34.1L8.8 32.6L7.4 31.8L5.9 32.2L4.4 33.4L2.9 33.2L1.5 30.6L0 30.1Z"/></svg></div>
<div class="ga" style="left:1208px;top:702px;width:8px"><b>fnv</b><svg class="wv" width="6" height="36" viewBox="0 0 6 36"><path fill="#16171d" d="M0 3L1.5 4.5L3 3.1L4.5 2.2L6 2.2L6 14.8L4.5 14.8L3 13.9L1.5 12.5L0 14ZM0 20.9L1.5 22.3L3 21.2L4.5 20.1L6 20.3L6 33.7L4.5 33.9L3 32.8L1.5 31.7L0 33.1Z"/></svg></div>
<div class="ga" style="left:1238px;top:702px;width:10px"><b>fnv</b><svg class="wv" width="8" height="36" viewBox="0 0 8 36"><path fill="#16171d" d="M0 2.5L1.6 3.7L3.2 1.2L4.8 3.9L6.4 2.1L8 2.1L8 14.9L6.4 14.9L4.8 13.1L3.2 15.8L1.6 13.3L0 14.5ZM0 21.5L1.6 21.7L3.2 19.8L4.8 22L6.4 20.6L8 20.4L8 33.6L6.4 33.4L4.8 32L3.2 34.2L1.6 32.3L0 32.5Z"/></svg></div>
<div class="ga" style="left:1266px;top:702px;width:12px"><b>fnv</b><svg class="wv" width="10" height="36" viewBox="0 0 10 36"><path fill="#16171d" d="M0 2.8L1.4 2.4L2.9 3.2L4.3 1.5L5.7 4L7.1 1.5L8.6 3.4L10 1.8L10 15.2L8.6 13.6L7.1 15.5L5.7 13L4.3 15.5L2.9 13.8L1.4 14.6L0 14.2ZM0 20.7L1.4 20.7L2.9 22L4.3 21L5.7 23.1L7.1 20.6L8.6 22.3L10 20.4L10 33.6L8.6 31.7L7.1 33.4L5.7 30.9L4.3 33L2.9 32L1.4 33.3L0 33.3Z"/></svg></div>
<div class="ga" style="left:1296px;top:702px;width:12px"><b>fnv</b><svg class="wv" width="10" height="36" viewBox="0 0 10 36"><path fill="#16171d" d="M0 2.3L1.4 2.3L2.9 3.1L4.3 1.7L5.7 4.3L7.1 2.5L8.6 3.1L10 2L10 15L8.6 13.9L7.1 14.5L5.7 12.7L4.3 15.3L2.9 13.9L1.4 14.7L0 14.7ZM0 20.9L1.4 20.9L2.9 21.6L4.3 21L5.7 22.6L7.1 20.7L8.6 22.4L10 21.1L10 32.9L8.6 31.6L7.1 33.3L5.7 31.4L4.3 33L2.9 32.4L1.4 33.1L0 33.1Z"/></svg></div>
<div class="ga" style="left:1326px;top:702px;width:12px"><b>fnv</b><svg class="wv" width="10" height="36" viewBox="0 0 10 36"><path fill="#16171d" d="M0 2.1L1.4 2.8L2.9 3L4.3 1.3L5.7 4.3L7.1 2L8.6 3.5L10 2.1L10 14.9L8.6 13.5L7.1 15L5.7 12.7L4.3 15.7L2.9 14L1.4 14.2L0 14.9ZM0 20.6L1.4 20.8L2.9 21.6L4.3 21L5.7 23.1L7.1 20.7L8.6 21.7L10 21L10 33L8.6 32.3L7.1 33.3L5.7 30.9L4.3 33L2.9 32.4L1.4 33.2L0 33.4Z"/></svg></div>
<div class="ga" style="left:1356px;top:702px;width:12px"><b>fnv</b><svg class="wv" width="10" height="36" viewBox="0 0 10 36"><path fill="#16171d" d="M0 2.3L1.4 3L2.9 3.7L4.3 2.2L5.7 4.1L7.1 1.6L8.6 3.3L10 2.5L10 14.5L8.6 13.7L7.1 15.4L5.7 12.9L4.3 14.8L2.9 13.3L1.4 14L0 14.7ZM0 20.9L1.4 21L2.9 21.8L4.3 20.9L5.7 22.4L7.1 20.8L8.6 21.5L10 20.3L10 33.7L8.6 32.5L7.1 33.2L5.7 31.6L4.3 33.1L2.9 32.2L1.4 33L0 33.1Z"/></svg></div>
<div class="ga" style="left:1386px;top:702px;width:12px"><b>fnv</b><svg class="wv" width="10" height="36" viewBox="0 0 10 36"><path fill="#16171d" d="M0 3L1.4 2.5L2.9 2.9L4.3 1.3L5.7 4.3L7.1 2.2L8.6 3.7L10 1.7L10 15.3L8.6 13.3L7.1 14.8L5.7 12.7L4.3 15.7L2.9 14.1L1.4 14.5L0 14ZM0 21.3L1.4 20.8L2.9 22.1L4.3 20.4L5.7 22.4L7.1 20.9L8.6 21.6L10 20.8L10 33.2L8.6 32.4L7.1 33.1L5.7 31.6L4.3 33.6L2.9 31.9L1.4 33.2L0 32.7Z"/></svg></div>
<div class="ga" style="left:1416px;top:702px;width:12px"><b>fnv</b><svg class="wv" width="10" height="36" viewBox="0 0 10 36"><path fill="#16171d" d="M0 1.9L1.4 2.2L2.9 3.5L4.3 1.4L5.7 4.3L7.1 2.5L8.6 3.9L10 2.3L10 14.7L8.6 13.1L7.1 14.5L5.7 12.7L4.3 15.6L2.9 13.5L1.4 14.8L0 15.1ZM0 21L1.4 21.2L2.9 22.1L4.3 20.6L5.7 22.9L7.1 19.9L8.6 22.4L10 20.5L10 33.5L8.6 31.6L7.1 34.1L5.7 31.1L4.3 33.4L2.9 31.9L1.4 32.8L0 33Z"/></svg></div>
<div class="gg" style="left:1428px;top:702px;width:18px"><b>fnv</b><svg class="wv" width="16" height="36" viewBox="0 0 16 36"><path fill="#4c4c4c" d="M0 2L1.5 2.4L2.9 2.7L4.4 3.3L5.8 1.5L7.3 2.4L8.7 4L10.2 2.9L11.6 1.2L13.1 2.6L14.5 4.2L16 2.4L16 14.6L14.5 12.8L13.1 14.4L11.6 15.8L10.2 14.1L8.7 13L7.3 14.6L5.8 15.5L4.4 13.7L2.9 14.3L1.5 14.6L0 15ZM0 21.2L1.5 21L2.9 22.1L4.4 21.7L5.8 20.8L7.3 20.1L8.7 22.6L10.2 21.6L11.6 20.3L13.1 21.5L14.5 22.7L16 20.2L16 33.8L14.5 31.3L13.1 32.5L11.6 33.7L10.2 32.4L8.7 31.4L7.3 33.9L5.8 33.2L4.4 32.3L2.9 31.9L1.5 33L0 32.8Z"/></svg></div>
<div class="ga" style="left:1446px;top:702px;width:30px"><b>fnv</b><svg class="wv" width="28" height="36" viewBox="0 0 28 36"><path fill="#16171d" d="M0 4.9L1.5 4.6L2.9 1.8L4.4 2.2L5.9 3.4L7.4 3.7L8.8 2.4L10.3 2.6L11.8 1.6L13.3 2.5L14.7 3.2L16.2 4L17.7 3.2L19.2 2.7L20.6 1.6L22.1 3.8L23.6 4.9L25.1 6.3L26.5 6.5L28 6.9L28 10.1L26.5 10.5L25.1 10.7L23.6 12.1L22.1 13.2L20.6 15.4L19.2 14.3L17.7 13.8L16.2 13L14.7 13.8L13.3 14.5L11.8 15.4L10.3 14.4L8.8 14.6L7.4 13.3L5.9 13.6L4.4 14.8L2.9 15.2L1.5 12.4L0 12.1ZM0 23.3L1.5 23.5L2.9 20.3L4.4 21.4L5.9 22.2L7.4 22.3L8.8 21.5L10.3 20.9L11.8 20.8L13.3 20.4L14.7 21.9L16.2 22.8L17.7 21L19.2 20L20.6 20.7L22.1 22.3L23.6 23.6L25.1 25L26.5 25L28 25.6L28 28.4L26.5 29L25.1 29L23.6 30.4L22.1 31.7L20.6 33.3L19.2 34L17.7 33L16.2 31.2L14.7 32.1L13.3 33.6L11.8 33.2L10.3 33.1L8.8 32.5L7.4 31.7L5.9 31.8L4.4 32.6L2.9 33.7L1.5 30.5L0 30.7Z"/></svg></div>
<div class="ga" style="left:1476px;top:702px;width:30px"><b>fnv</b><svg class="wv" width="28" height="36" viewBox="0 0 28 36"><path fill="#16171d" d="M0 5.3L1.5 5L2.9 1.9L4.4 2.2L5.9 3.5L7.4 3.8L8.8 2.7L10.3 1.9L11.8 2.1L13.3 2.6L14.7 3.9L16.2 4.3L17.7 2.4L19.2 2.6L20.6 2.2L22.1 3.3L23.6 4.6L25.1 6.4L26.5 6.5L28 7L28 10L26.5 10.5L25.1 10.6L23.6 12.4L22.1 13.7L20.6 14.8L19.2 14.4L17.7 14.6L16.2 12.7L14.7 13.1L13.3 14.4L11.8 14.9L10.3 15.1L8.8 14.3L7.4 13.2L5.9 13.5L4.4 14.8L2.9 15.1L1.5 12L0 11.7ZM0 23.7L1.5 23.4L2.9 19.9L4.4 20.8L5.9 21.9L7.4 22.7L8.8 21.7L10.3 20.2L11.8 19.9L13.3 21L14.7 21.9L16.2 23L17.7 21.5L19.2 20.1L20.6 20.3L22.1 21.5L23.6 23L25.1 24.9L26.5 25.1L28 25.6L28 28.4L26.5 28.9L25.1 29.1L23.6 31L22.1 32.5L20.6 33.7L19.2 33.9L17.7 32.5L16.2 31L14.7 32.1L13.3 33L11.8 34.1L10.3 33.8L8.8 32.3L7.4 31.3L5.9 32.1L4.4 33.2L2.9 34.1L1.5 30.6L0 30.3Z"/></svg></div>
<div class="ga" style="left:1506px;top:702px;width:30px"><b>fnv</b><svg class="wv" width="28" height="36" viewBox="0 0 28 36"><path fill="#16171d" d="M0 5.1L1.5 4.7L2.9 1.4L4.4 2.4L5.9 3.6L7.4 3.5L8.8 2.7L10.3 1.9L11.8 2.5L13.3 2.1L14.7 3.7L16.2 3.7L17.7 2.8L19.2 2.4L20.6 2.6L22.1 3.6L23.6 4.8L25.1 6.2L26.5 6.6L28 7.1L28 9.9L26.5 10.4L25.1 10.8L23.6 12.2L22.1 13.4L20.6 14.4L19.2 14.6L17.7 14.2L16.2 13.3L14.7 13.3L13.3 14.9L11.8 14.5L10.3 15.1L8.8 14.3L7.4 13.5L5.9 13.4L4.4 14.6L2.9 15.6L1.5 12.3L0 11.9ZM0 23.6L1.5 23.3L2.9 20.6L4.4 21.5L5.9 22.2L7.4 22.7L8.8 21.4L10.3 20.5L11.8 19.8L13.3 20.8L14.7 21.6L16.2 22.6L17.7 21.7L19.2 20.9L20.6 20.1L22.1 21.7L23.6 23.5L25.1 25L26.5 24.9L28 25.4L28 28.6L26.5 29.1L25.1 29L23.6 30.5L22.1 32.3L20.6 33.9L19.2 33.1L17.7 32.3L16.2 31.4L14.7 32.4L13.3 33.2L11.8 34.2L10.3 33.5L8.8 32.6L7.4 31.3L5.9 31.8L4.4 32.5L2.9 33.4L1.5 30.7L0 30.4Z"/></svg></div>
<div class="ga" style="left:1536px;top:702px;width:30px"><b>fnv</b><svg class="wv" width="28" height="36" viewBox="0 0 28 36"><path fill="#16171d" d="M0 5.2L1.5 5L2.9 1.8L4.4 2.2L5.9 4L7.4 4.2L8.8 2.8L10.3 2.1L11.8 1.7L13.3 2.8L14.7 3.1L16.2 3.9L17.7 2.9L19.2 2.5L20.6 1.6L22.1 3.6L23.6 4.6L25.1 6.4L26.5 6.6L28 6.9L28 10.1L26.5 10.4L25.1 10.6L23.6 12.4L22.1 13.4L20.6 15.4L19.2 14.5L17.7 14.1L16.2 13.1L14.7 13.9L13.3 14.2L11.8 15.3L10.3 14.9L8.8 14.2L7.4 12.8L5.9 13L4.4 14.8L2.9 15.2L1.5 12L0 11.8ZM0 23.8L1.5 23L2.9 20.5L4.4 21.5L5.9 22.5L7.4 22.3L8.8 21L10.3 19.9L11.8 20.9L13.3 21.1L14.7 22.2L16.2 22.2L17.7 21.8L19.2 21.2L20.6 21.2L22.1 22L23.6 23.1L25.1 24.6L26.5 24.8L28 25.3L28 28.7L26.5 29.2L25.1 29.4L23.6 30.9L22.1 32L20.6 32.8L19.2 32.8L17.7 32.2L16.2 31.8L14.7 31.8L13.3 32.9L11.8 33.1L10.3 34.1L8.8 33L7.4 31.7L5.9 31.5L4.4 32.5L2.9 33.5L1.5 31L0 30.2Z"/></svg></div>
<div class="ga" style="left:1566px;top:702px;width:16px"><b>fnv</b><svg class="wv" width="14" height="36" viewBox="0 0 14 36"><path fill="#16171d" d="M0 1.9L1.6 2.3L3.1 4.3L4.7 1.8L6.2 1.8L7.8 4.5L9.3 2.1L10.9 2.2L12.4 4.3L14 2.5L14 14.5L12.4 12.7L10.9 14.8L9.3 14.9L7.8 12.5L6.2 15.2L4.7 15.2L3.1 12.7L1.6 14.7L0 15.1ZM0 21.3L1.6 21.2L3.1 22.7L4.7 21L6.2 20L7.8 22.9L9.3 20.3L10.9 21L12.4 22.8L14 20.4L14 33.6L12.4 31.2L10.9 33L9.3 33.7L7.8 31.1L6.2 34L4.7 33L3.1 31.3L1.6 32.8L0 32.7Z"/></svg></div>
<div class="ga" style="left:1582px;top:702px;width:14px"><b>fnv</b><svg class="wv" width="12" height="36" viewBox="0 0 12 36"><path fill="#16171d" d="M0 2L1.5 2.3L3 4.4L4.5 2L6 3L7.5 2.6L9 2.3L10.5 4L12 1.8L12 15.2L10.5 13L9 14.7L7.5 14.4L6 14L4.5 15L3 12.6L1.5 14.7L0 15ZM0 21.5L1.5 20.8L3 22.3L4.5 20.1L6 21.9L7.5 22.1L9 21L10.5 22L12 21.1L12 32.9L10.5 32L9 33L7.5 31.9L6 32.1L4.5 33.9L3 31.7L1.5 33.2L0 32.5Z"/></svg></div>
<div class="ga" style="left:1596px;top:702px;width:16px"><b>fnv</b><svg class="wv" width="14" height="36" viewBox="0 0 14 36"><path fill="#16171d" d="M0 2.1L1.6 1.5L3.1 4.2L4.7 2.6L6.2 1.5L7.8 4L9.3 2.6L10.9 1.8L12.4 4.3L14 2.6L14 14.4L12.4 12.7L10.9 15.2L9.3 14.4L7.8 13L6.2 15.5L4.7 14.4L3.1 12.8L1.6 15.5L0 14.9ZM0 21.5L1.6 20.2L3.1 22.2L4.7 20.7L6.2 20L7.8 23L9.3 21.2L10.9 20.6L12.4 22.3L14 20.2L14 33.8L12.4 31.7L10.9 33.4L9.3 32.8L7.8 31L6.2 34L4.7 33.3L3.1 31.8L1.6 33.8L0 32.5Z"/></svg></div>
<div class="ga" style="left:1612px;top:702px;width:14px"><b>fnv</b><svg class="wv" width="12" height="36" viewBox="0 0 12 36"><path fill="#16171d" d="M0 2.5L1.5 2.5L3 4.1L4.5 1.9L6 2.4L7.5 3.4L9 1.5L10.5 3.6L12 1.9L12 15.1L10.5 13.4L9 15.5L7.5 13.6L6 14.6L4.5 15.1L3 12.9L1.5 14.5L0 14.5ZM0 20.6L1.5 20.6L3 22.7L4.5 20.7L6 21.5L7.5 21.2L9 20.9L10.5 22.6L12 20.5L12 33.5L10.5 31.4L9 33.1L7.5 32.8L6 32.5L4.5 33.3L3 31.3L1.5 33.4L0 33.4Z"/></svg></div>
<div class="ga" style="left:1626px;top:702px;width:8px"><b></b><svg class="wv" width="6" height="36" viewBox="0 0 6 36"><path fill="#16171d" d="M0 2.7L1.5 4.4L3 3.4L4.5 1.8L6 2.5L6 14.5L4.5 15.2L3 13.6L1.5 12.6L0 14.3ZM0 20.3L1.5 22.2L3 20.8L4.5 20.7L6 21.3L6 32.7L4.5 33.3L3 33.2L1.5 31.8L0 33.7Z"/></svg></div>
<div class="ga" style="left:1634px;top:702px;width:8px"><b></b><svg class="wv" width="6" height="36" viewBox="0 0 6 36"><path fill="#16171d" d="M0 2.9L1.5 4L3 2.7L4.5 2L6 2.6L6 14.4L4.5 15L3 14.3L1.5 13L0 14.1ZM0 21L1.5 22.4L3 21.2L4.5 20.1L6 20.4L6 33.6L4.5 33.9L3 32.8L1.5 31.6L0 33Z"/></svg></div>
<div class="ga" style="left:1642px;top:702px;width:6px"><b></b><svg class="wv" width="4" height="36" viewBox="0 0 4 36"><path fill="#16171d" d="M0 2.2L1.3 2.8L2.7 1.9L4 2.5L4 14.5L2.7 15.1L1.3 14.2L0 14.8ZM0 20.8L1.3 21L2.7 20.5L4 21.2L4 32.8L2.7 33.5L1.3 33L0 33.2Z"/></svg></div>
<div class="ga" style="left:1648px;top:702px;width:8px"><b></b><svg class="wv" width="6" height="36" viewBox="0 0 6 36"><path fill="#16171d" d="M0 2.7L1.5 4.3L3 3.3L4.5 1.4L6 2.2L6 14.8L4.5 15.6L3 13.7L1.5 12.7L0 14.3ZM0 21.1L1.5 22.6L3 20.8L4.5 20.4L6 21.1L6 32.9L4.5 33.6L3 33.2L1.5 31.4L0 32.9Z"/></svg></div>
<div class="ga" style="left:1656px;top:702px;width:4px"><b></b><svg class="wv" width="2" height="36" viewBox="0 0 2 36"><path fill="#16171d" d="M0 2L1 2.7L2 1.7L2 15.3L1 14.3L0 15ZM0 21.4L1 21.4L2 20.4L2 33.6L1 32.6L0 32.6Z"/></svg></div>
<div class="ga" style="left:1660px;top:702px;width:4px"><b></b><svg class="wv" width="2" height="36" viewBox="0 0 2 36"><path fill="#16171d" d="M0 2L1 2.4L2 2.9L2 14.1L1 14.6L0 15ZM0 21.2L1 21.8L2 21.2L2 32.8L1 32.2L0 32.8Z"/></svg></div>
<div class="ga" style="left:1664px;top:702px;width:4px"><b></b><svg class="wv" width="2" height="36" viewBox="0 0 2 36"><path fill="#16171d" d="M0 1.8L1 2.8L2 1.8L2 15.2L1 14.2L0 15.2ZM0 21.1L1 21L2 20.9L2 33.1L1 33L0 32.9Z"/></svg></div>
<div class="ga" style="left:1668px;top:702px;width:4px"><b></b><svg class="wv" width="2" height="36" viewBox="0 0 2 36"><path fill="#16171d" d="M0 2.7L1 2.6L2 1.7L2 15.3L1 14.4L0 14.3ZM0 21.4L1 21.3L2 20.6L2 33.4L1 32.7L0 32.6Z"/></svg></div>
<div class="gg" style="left:1672px;top:702px;width:6px"><b></b><svg class="wv" width="4" height="36" viewBox="0 0 4 36"><path fill="#4c4c4c" d="M0 2.7L1.3 2.5L2.7 2.8L4 2.7L4 14.3L2.7 14.2L1.3 14.5L0 14.3ZM0 21.2L1.3 20.7L2.7 20.6L4 21.2L4 32.8L2.7 33.4L1.3 33.3L0 32.8Z"/></svg></div>
<div class="ga" style="left:1686px;top:702px;width:30px"><b>fnv</b><svg class="wv" width="28" height="36" viewBox="0 0 28 36"><path fill="#16171d" d="M0 5.5L1.5 5L2.9 1.8L4.4 3L5.9 4L7.4 4L8.8 2.3L10.3 1.9L11.8 2.5L13.3 2.9L14.7 3.5L16.2 4L17.7 2.8L19.2 2.6L20.6 2.6L22.1 3.2L23.6 4.9L25.1 6.4L26.5 6.5L28 6.8L28 10.2L26.5 10.5L25.1 10.6L23.6 12.1L22.1 13.8L20.6 14.4L19.2 14.4L17.7 14.2L16.2 13L14.7 13.5L13.3 14.1L11.8 14.5L10.3 15.1L8.8 14.7L7.4 13L5.9 13L4.4 14L2.9 15.2L1.5 12L0 11.5ZM0 23.8L1.5 23.3L2.9 20.7L4.4 21.3L5.9 21.9L7.4 21.8L8.8 21.3L10.3 20.9L11.8 20.1L13.3 21.3L14.7 22.4L16.2 22.2L17.7 21.5L19.2 20.2L20.6 20.8L22.1 21.5L23.6 23.4L25.1 24.9L26.5 25.1L28 25.4L28 28.6L26.5 28.9L25.1 29.1L23.6 30.6L22.1 32.5L20.6 33.2L19.2 33.8L17.7 32.5L16.2 31.8L14.7 31.6L13.3 32.7L11.8 33.9L10.3 33.1L8.8 32.7L7.4 32.2L5.9 32.1L4.4 32.7L2.9 33.3L1.5 30.7L0 30.2Z"/></svg></div>
<div class="ga" style="left:1716px;top:702px;width:30px"><b>fnv</b><svg class="wv" width="28" height="36" viewBox="0 0 28 36"><path fill="#16171d" d="M0 5.1L1.5 4.6L2.9 2.5L4.4 2.5L5.9 3.9L7.4 3.7L8.8 3.1L10.3 2.3L11.8 1.9L13.3 1.9L14.7 3.8L16.2 4.1L17.7 2.6L19.2 1.5L20.6 2.5L22.1 3.8L23.6 4.6L25.1 6.1L26.5 6.4L28 7.1L28 9.9L26.5 10.6L25.1 10.9L23.6 12.4L22.1 13.2L20.6 14.5L19.2 15.5L17.7 14.4L16.2 12.9L14.7 13.2L13.3 15.1L11.8 15.1L10.3 14.7L8.8 13.9L7.4 13.3L5.9 13.1L4.4 14.5L2.9 14.5L1.5 12.4L0 11.9ZM0 23.4L1.5 23.4L2.9 20L4.4 21L5.9 22L7.4 22.6L8.8 20.8L10.3 20.8L11.8 20.5L13.3 20.5L14.7 21.6L16.2 22.9L17.7 21.7L19.2 20.7L20.6 20.6L22.1 22L23.6 23.6L25.1 24.9L26.5 24.8L28 25.3L28 28.7L26.5 29.2L25.1 29.1L23.6 30.4L22.1 32L20.6 33.4L19.2 33.3L17.7 32.3L16.2 31.1L14.7 32.4L13.3 33.5L11.8 33.5L10.3 33.2L8.8 33.2L7.4 31.4L5.9 32L4.4 33L2.9 34L1.5 30.6L0 30.6Z"/></svg></div>
<div class="ga" style="left:1746px;top:702px;width:30px"><b>fnv</b><svg class="wv" width="28" height="36" viewBox="0 0 28 36"><path fill="#16171d" d="M0 5.5L1.5 4.8L2.9 1.7L4.4 3.2L5.9 3.5L7.4 4.1L8.8 2.5L10.3 1.9L11.8 1.7L13.3 2.7L14.7 3.5L16.2 4L17.7 3L19.2 1.9L20.6 2.2L22.1 3.5L23.6 5.2L25.1 6.2L26.5 6.4L28 7L28 10L26.5 10.6L25.1 10.8L23.6 11.8L22.1 13.5L20.6 14.8L19.2 15.1L17.7 14L16.2 13L14.7 13.5L13.3 14.3L11.8 15.3L10.3 15.1L8.8 14.5L7.4 12.9L5.9 13.5L4.4 13.8L2.9 15.3L1.5 12.2L0 11.5ZM0 23.5L1.5 23.2L2.9 20.5L4.4 21.5L5.9 22.3L7.4 22.6L8.8 21.6L10.3 20.6L11.8 20.9L13.3 21L14.7 21.9L16.2 23L17.7 21.3L19.2 21.1L20.6 20.4L22.1 21.6L23.6 23.4L25.1 25L26.5 24.9L28 25.5L28 28.5L26.5 29.1L25.1 29L23.6 30.6L22.1 32.4L20.6 33.6L19.2 32.9L17.7 32.7L16.2 31L14.7 32.1L13.3 33L11.8 33.1L10.3 33.4L8.8 32.4L7.4 31.4L5.9 31.7L4.4 32.5L2.9 33.5L1.5 30.8L0 30.5Z"/></svg></div>
<div class="ga" style="left:1776px;top:702px;width:30px"><b>fnv</b><svg class="wv" width="28" height="36" viewBox="0 0 28 36"><path fill="#16171d" d="M0 4.8L1.5 5.1L2.9 1.5L4.4 2.1L5.9 3.6L7.4 3.4L8.8 3L10.3 1.4L11.8 1.9L13.3 1.9L14.7 3L16.2 4.4L17.7 2.6L19.2 1.6L20.6 2.7L22.1 3.5L23.6 4.7L25.1 6.4L26.5 6.3L28 7L28 10L26.5 10.7L25.1 10.6L23.6 12.3L22.1 13.5L20.6 14.3L19.2 15.4L17.7 14.4L16.2 12.6L14.7 14L13.3 15.1L11.8 15.1L10.3 15.6L8.8 14L7.4 13.6L5.9 13.4L4.4 14.9L2.9 15.5L1.5 11.9L0 12.2ZM0 23.4L1.5 23.6L2.9 20.5L4.4 20.7L5.9 22.5L7.4 22.5L8.8 21.1L10.3 20.7L11.8 21L13.3 21.3L14.7 22.3L16.2 22.2L17.7 21.2L19.2 20.1L20.6 21.1L22.1 21.6L23.6 23.7L25.1 24.8L26.5 24.9L28 25.5L28 28.5L26.5 29.1L25.1 29.2L23.6 30.3L22.1 32.4L20.6 32.9L19.2 33.9L17.7 32.8L16.2 31.8L14.7 31.7L13.3 32.7L11.8 33L10.3 33.3L8.8 32.9L7.4 31.5L5.9 31.5L4.4 33.3L2.9 33.5L1.5 30.4L0 30.6Z"/></svg></div>
<div class="ga" style="left:1806px;top:702px;width:30px"><b>fnv</b><svg class="wv" width="28" height="36" viewBox="0 0 28 36"><path fill="#16171d" d="M0 4.9L1.5 4.8L2.9 1.9L4.4 2.2L5.9 4.1L7.4 3.3L8.8 2.5L10.3 2.1L11.8 1.5L13.3 2.7L14.7 2.9L16.2 4L17.7 3.1L19.2 1.8L20.6 2.2L22.1 3.7L23.6 4.7L25.1 6.5L26.5 6.3L28 7L28 10L26.5 10.7L25.1 10.5L23.6 12.3L22.1 13.3L20.6 14.8L19.2 15.2L17.7 13.9L16.2 13L14.7 14.1L13.3 14.3L11.8 15.5L10.3 14.9L8.8 14.5L7.4 13.7L5.9 12.9L4.4 14.8L2.9 15.1L1.5 12.2L0 12.1ZM0 23.6L1.5 23L2.9 20.4L4.4 21L5.9 22.5L7.4 22.7L8.8 21.7L10.3 20.9L11.8 20.2L13.3 21L14.7 21.9L16.2 22.2L17.7 21.8L19.2 21L20.6 20.5L22.1 22.4L23.6 23.7L25.1 24.8L26.5 25.1L28 25.5L28 28.5L26.5 28.9L25.1 29.2L23.6 30.3L22.1 31.6L20.6 33.5L19.2 33L17.7 32.2L16.2 31.8L14.7 32.1L13.3 33L11.8 33.8L10.3 33.1L8.8 32.3L7.4 31.3L5.9 31.5L4.4 33L2.9 33.6L1.5 31L0 30.4Z"/></svg></div>
<div class="ga" style="left:1836px;top:702px;width:30px"><b>fnv</b><svg class="wv" width="28" height="36" viewBox="0 0 28 36"><path fill="#16171d" d="M0 5.3L1.5 4.8L2.9 1.9L4.4 3L5.9 3.7L7.4 3.8L8.8 3.1L10.3 1.4L11.8 2.2L13.3 2.9L14.7 3.8L16.2 4L17.7 2.5L19.2 1.8L20.6 2.3L22.1 3.6L23.6 5.2L25.1 6.2L26.5 6.4L28 7L28 10L26.5 10.6L25.1 10.8L23.6 11.8L22.1 13.4L20.6 14.7L19.2 15.2L17.7 14.5L16.2 13L14.7 13.2L13.3 14.1L11.8 14.8L10.3 15.6L8.8 13.9L7.4 13.2L5.9 13.3L4.4 14L2.9 15.1L1.5 12.2L0 11.7ZM0 23.6L1.5 23.4L2.9 19.9L4.4 20.9L5.9 22.5L7.4 21.9L8.8 21.7L10.3 20.4L11.8 20.5L13.3 21.2L14.7 22.4L16.2 22.3L17.7 22L19.2 20.5L20.6 20.1L22.1 22.3L23.6 23.6L25.1 24.7L26.5 24.9L28 25.4L28 28.6L26.5 29.1L25.1 29.3L23.6 30.4L22.1 31.7L20.6 33.9L19.2 33.5L17.7 32L16.2 31.7L14.7 31.6L13.3 32.8L11.8 33.5L10.3 33.6L8.8 32.3L7.4 32.1L5.9 31.5L4.4 33.1L2.9 34.1L1.5 30.6L0 30.4Z"/></svg></div>
<div class="ga" style="left:1866px;top:702px;width:30px"><b>fnv</b><svg class="wv" width="28" height="36" viewBox="0 0 28 36"><path fill="#16171d" d="M0 4.9L1.5 5.1L2.9 2.2L4.4 2.9L5.9 4.2L7.4 3.4L8.8 2.3L10.3 1.7L11.8 2.5L13.3 2L14.7 3.2L16.2 4.1L17.7 2.7L19.2 2.2L20.6 2.5L22.1 3.8L23.6 5.1L25.1 6.5L26.5 6.5L28 6.9L28 10.1L26.5 10.5L25.1 10.5L23.6 11.9L22.1 13.2L20.6 14.5L19.2 14.8L17.7 14.3L16.2 12.9L14.7 13.8L13.3 15L11.8 14.5L10.3 15.3L8.8 14.7L7.4 13.6L5.9 12.8L4.4 14.1L2.9 14.8L1.5 11.9L0 12.1ZM0 23.5L1.5 23.1L2.9 20.2L4.4 21.4L5.9 22.2L7.4 22.3L8.8 20.8L10.3 20.4L11.8 20.7L13.3 20.8L14.7 21.5L16.2 22.8L17.7 21L19.2 21.2L20.6 21L22.1 22.2L23.6 23.2L25.1 24.6L26.5 24.8L28 25.5L28 28.5L26.5 29.2L25.1 29.4L23.6 30.8L22.1 31.8L20.6 33L19.2 32.8L17.7 33L16.2 31.2L14.7 32.5L13.3 33.2L11.8 33.3L10.3 33.6L8.8 33.2L7.4 31.7L5.9 31.8L4.4 32.6L2.9 33.8L1.5 30.9L0 30.5Z"/></svg></div>
<div class="ga" style="left:1896px;top:702px;width:30px"><b>fnv</b><svg class="wv" width="28" height="36" viewBox="0 0 28 36"><path fill="#16171d" d="M0 4.9L1.5 5L2.9 2.3L4.4 2.2L5.9 3.7L7.4 3.6L8.8 2.5L10.3 1.4L11.8 1.9L13.3 2L14.7 3.2L16.2 3.8L17.7 3L19.2 1.8L20.6 2.1L22.1 3.6L23.6 5.1L25.1 6.2L26.5 6.6L28 6.8L28 10.2L26.5 10.4L25.1 10.8L23.6 11.9L22.1 13.4L20.6 14.9L19.2 15.2L17.7 14L16.2 13.2L14.7 13.8L13.3 15L11.8 15.1L10.3 15.6L8.8 14.5L7.4 13.4L5.9 13.3L4.4 14.8L2.9 14.7L1.5 12L0 12.1ZM0 23.9L1.5 23.7L2.9 21L4.4 20.7L5.9 22.4L7.4 22.6L8.8 21.7L10.3 21.1L11.8 20.1L13.3 20.8L14.7 21.7L16.2 22.4L17.7 21.9L19.2 20.5L20.6 20.8L22.1 21.6L23.6 23.1L25.1 24.6L26.5 25.1L28 25.3L28 28.7L26.5 28.9L25.1 29.4L23.6 30.9L22.1 32.4L20.6 33.2L19.2 33.5L17.7 32.1L16.2 31.6L14.7 32.3L13.3 33.2L11.8 33.9L10.3 32.9L8.8 32.3L7.4 31.4L5.9 31.6L4.4 33.3L2.9 33L1.5 30.3L0 30.1Z"/></svg></div>
<div class="ba" style="left:250px;top:776px;width:14px"><b>N</b><i style="left:3.9px;width:3.5px"></i><i style="left:9.6px;width:2.2px"></i></div>
<div class="ba" style="left:264px;top:776px;width:16px"><b>N</b><i style="left:0px;width:1.6px"></i><i style="left:3.8px;width:5.2px"></i><i style="left:11.2px;width:2px"></i></div>
<div class="ba" style="left:280px;top:776px;width:14px"><b>N</b><i style="left:3.9px;width:3.5px"></i><i style="left:9.6px;width:2.2px"></i></div>
<div class="ba" style="left:294px;top:776px;width:16px"><b>N</b><i style="left:0px;width:1.6px"></i><i style="left:3.8px;width:5.2px"></i><i style="left:11.2px;width:2px"></i></div>
<div class="ba" style="left:310px;top:776px;width:14px"><b>N</b><i style="left:3.9px;width:3.5px"></i><i style="left:9.6px;width:2.2px"></i></div>
<div class="ba" style="left:324px;top:776px;width:16px"><b>N</b><i style="left:0px;width:1.6px"></i><i style="left:3.8px;width:5.2px"></i><i style="left:11.2px;width:2px"></i></div>
<div class="ba" style="left:340px;top:776px;width:14px"><b>N</b><i style="left:3.9px;width:3.5px"></i><i style="left:9.6px;width:2.2px"></i></div>
<div class="ba" style="left:354px;top:776px;width:16px"><b>N</b><i style="left:0px;width:1.6px"></i><i style="left:3.8px;width:5.2px"></i><i style="left:11.2px;width:2px"></i></div>
<div class="ba" style="left:370px;top:776px;width:14px"><b>N</b><i style="left:3.9px;width:3.5px"></i><i style="left:9.6px;width:2.2px"></i></div>
<div class="ba" style="left:384px;top:776px;width:16px"><b>N</b><i style="left:0px;width:1.6px"></i><i style="left:3.8px;width:5.2px"></i><i style="left:11.2px;width:2px"></i></div>
<div class="ba" style="left:400px;top:776px;width:14px"><b>N</b><i style="left:3.9px;width:3.5px"></i><i style="left:9.6px;width:2.2px"></i></div>
<div class="ba" style="left:414px;top:776px;width:14px"><b>N</b><i style="left:0px;width:1.6px"></i><i style="left:3.8px;width:5.2px"></i></div>
<div class="ba" style="left:428px;top:776px;width:16px"><b>N</b><i style="left:3.9px;width:3.5px"></i><i style="left:9.6px;width:2.2px"></i></div>
<div class="ba" style="left:444px;top:776px;width:14px"><b>N</b><i style="left:0px;width:1.6px"></i><i style="left:3.8px;width:5.2px"></i></div>
<div class="ba" style="left:458px;top:776px;width:16px"><b>N</b><i style="left:3.9px;width:3.5px"></i><i style="left:9.6px;width:2.2px"></i></div>
<div class="ba" style="left:488px;top:776px;width:16px"><b>N</b><i style="left:3.9px;width:3.5px"></i><i style="left:9.6px;width:2.2px"></i></div>
<div class="ba" style="left:504px;top:776px;width:14px"><b>N</b><i style="left:0px;width:1.6px"></i><i style="left:3.8px;width:5.2px"></i></div>
<div class="ba" style="left:518px;top:776px;width:16px"><b>N</b><i style="left:3.9px;width:3.5px"></i><i style="left:9.6px;width:2.2px"></i></div>
<div class="ba" style="left:534px;top:776px;width:14px"><b>N</b><i style="left:0px;width:1.6px"></i><i style="left:3.8px;width:5.2px"></i></div>
<div class="ba" style="left:548px;top:776px;width:16px"><b>N</b><i style="left:3.9px;width:3.5px"></i><i style="left:9.6px;width:2.2px"></i></div>
<div class="ba" style="left:564px;top:776px;width:14px"><b>N</b><i style="left:0px;width:1.6px"></i><i style="left:3.8px;width:5.2px"></i></div>
<div class="ba" style="left:578px;top:776px;width:16px"><b>N</b><i style="left:3.9px;width:3.5px"></i><i style="left:9.6px;width:2.2px"></i></div>
<div class="ba" style="left:608px;top:776px;width:16px"><b>N</b><i style="left:3.9px;width:3.5px"></i><i style="left:9.6px;width:2.2px"></i></div>
<div class="ba" style="left:624px;top:776px;width:14px"><b>N</b><i style="left:0px;width:1.6px"></i><i style="left:3.8px;width:5.2px"></i></div>
<div class="ba" style="left:638px;top:776px;width:16px"><b>N</b><i style="left:3.9px;width:3.5px"></i><i style="left:9.6px;width:2.2px"></i></div>
<div class="ba" style="left:654px;top:776px;width:14px"><b>N</b><i style="left:0px;width:1.6px"></i><i style="left:3.8px;width:5.2px"></i></div>
<div class="ba" style="left:668px;top:776px;width:16px"><b>N</b><i style="left:3.9px;width:3.5px"></i><i style="left:9.6px;width:2.2px"></i></div>
<div class="ba" style="left:684px;top:776px;width:14px"><b>N</b><i style="left:0px;width:1.6px"></i><i style="left:3.8px;width:5.2px"></i></div>
<div class="ba" style="left:698px;top:776px;width:16px"><b>N</b><i style="left:3.9px;width:3.5px"></i><i style="left:9.6px;width:2.2px"></i></div>
<div class="ba" style="left:714px;top:776px;width:14px"><b>N</b><i style="left:0px;width:1.6px"></i><i style="left:3.8px;width:5.2px"></i></div>
<div class="ba" style="left:728px;top:776px;width:16px"><b>N</b><i style="left:3.9px;width:3.5px"></i><i style="left:9.6px;width:2.2px"></i></div>
<div class="ba" style="left:744px;top:776px;width:14px"><b>N</b><i style="left:0px;width:1.6px"></i><i style="left:3.8px;width:5.2px"></i></div>
<div class="ba" style="left:758px;top:776px;width:16px"><b>N</b><i style="left:3.9px;width:3.5px"></i><i style="left:9.6px;width:2.2px"></i></div>
<div class="ba" style="left:774px;top:776px;width:14px"><b>N</b><i style="left:0px;width:1.6px"></i><i style="left:3.8px;width:5.2px"></i></div>
<div class="ba" style="left:788px;top:776px;width:16px"><b>N</b><i style="left:3.9px;width:3.5px"></i><i style="left:9.6px;width:2.2px"></i></div>
<div class="ba" style="left:804px;top:776px;width:14px"><b>N</b><i style="left:0px;width:1.6px"></i><i style="left:3.8px;width:5.2px"></i></div>
<div class="ba" style="left:818px;top:776px;width:16px"><b>N</b><i style="left:3.9px;width:3.5px"></i><i style="left:9.6px;width:2.2px"></i></div>
<div class="ba" style="left:834px;top:776px;width:14px"><b>N</b><i style="left:0px;width:1.6px"></i><i style="left:3.8px;width:5.2px"></i></div>
<div class="ba" style="left:848px;top:776px;width:14px"><b>N</b><i style="left:3.9px;width:3.5px"></i><i style="left:9.6px;width:2.2px"></i></div>
<div class="ba" style="left:862px;top:776px;width:16px"><b>N</b><i style="left:0px;width:1.6px"></i><i style="left:3.8px;width:5.2px"></i><i style="left:11.2px;width:2px"></i></div>
<div class="ba" style="left:878px;top:776px;width:14px"><b>N</b><i style="left:3.9px;width:3.5px"></i><i style="left:9.6px;width:2.2px"></i></div>
<div class="ba" style="left:892px;top:776px;width:16px"><b>N</b><i style="left:0px;width:1.6px"></i><i style="left:3.8px;width:5.2px"></i><i style="left:11.2px;width:2px"></i></div>
<div class="ba" style="left:908px;top:776px;width:14px"><b>N</b><i style="left:3.9px;width:3.5px"></i><i style="left:9.6px;width:2.2px"></i></div>
<div class="ba" style="left:922px;top:776px;width:16px"><b>N</b><i style="left:0px;width:1.6px"></i><i style="left:3.8px;width:5.2px"></i><i style="left:11.2px;width:2px"></i></div>
<div class="ba" style="left:938px;top:776px;width:14px"><b>N</b><i style="left:3.9px;width:3.5px"></i><i style="left:9.6px;width:2.2px"></i></div>
<div class="ba" style="left:968px;top:776px;width:14px"><b>N</b><i style="left:3.9px;width:3.5px"></i><i style="left:9.6px;width:2.2px"></i></div>
<div class="ba" style="left:982px;top:776px;width:16px"><b>N</b><i style="left:0px;width:1.6px"></i><i style="left:3.8px;width:5.2px"></i><i style="left:11.2px;width:2px"></i></div>
<div class="ba" style="left:998px;top:776px;width:14px"><b>N</b><i style="left:3.9px;width:3.5px"></i><i style="left:9.6px;width:2.2px"></i></div>
<div class="ba" style="left:1012px;top:776px;width:16px"><b>N</b><i style="left:0px;width:1.6px"></i><i style="left:3.8px;width:5.2px"></i><i style="left:11.2px;width:2px"></i></div>
<div class="ba" style="left:1028px;top:776px;width:14px"><b>N</b><i style="left:3.9px;width:3.5px"></i><i style="left:9.6px;width:2.2px"></i></div>
<div class="ba" style="left:1042px;top:776px;width:16px"><b>N</b><i style="left:0px;width:1.6px"></i><i style="left:3.8px;width:5.2px"></i><i style="left:11.2px;width:2px"></i></div>
<div class="ba" style="left:1058px;top:776px;width:14px"><b>N</b><i style="left:3.9px;width:3.5px"></i><i style="left:9.6px;width:2.2px"></i></div>
<div class="ba" style="left:1072px;top:776px;width:16px"><b>N</b><i style="left:0px;width:1.6px"></i><i style="left:3.8px;width:5.2px"></i><i style="left:11.2px;width:2px"></i></div>
<div class="ba" style="left:1088px;top:776px;width:14px"><b>N</b><i style="left:3.9px;width:3.5px"></i><i style="left:9.6px;width:2.2px"></i></div>
<div class="ba" style="left:1102px;top:776px;width:16px"><b>N</b><i style="left:0px;width:1.6px"></i><i style="left:3.8px;width:5.2px"></i><i style="left:11.2px;width:2px"></i></div>
<div class="ba" style="left:1118px;top:776px;width:14px"><b>N</b><i style="left:3.9px;width:3.5px"></i><i style="left:9.6px;width:2.2px"></i></div>
<div class="ba" style="left:1132px;top:776px;width:16px"><b>N</b><i style="left:0px;width:1.6px"></i><i style="left:3.8px;width:5.2px"></i><i style="left:11.2px;width:2px"></i></div>
<div class="ba" style="left:1148px;top:776px;width:14px"><b>N</b><i style="left:3.9px;width:3.5px"></i><i style="left:9.6px;width:2.2px"></i></div>
<div class="ba" style="left:1162px;top:776px;width:16px"><b>N</b><i style="left:0px;width:1.6px"></i><i style="left:3.8px;width:5.2px"></i><i style="left:11.2px;width:2px"></i></div>
<div class="ba" style="left:1178px;top:776px;width:14px"><b>N</b><i style="left:3.9px;width:3.5px"></i><i style="left:9.6px;width:2.2px"></i></div>
<div class="ba" style="left:1192px;top:776px;width:16px"><b>N</b><i style="left:0px;width:1.6px"></i><i style="left:3.8px;width:5.2px"></i><i style="left:11.2px;width:2px"></i></div>
<div class="ba" style="left:1446px;top:776px;width:16px"><b>N</b><i style="left:3.9px;width:3.5px"></i><i style="left:9.6px;width:2.2px"></i></div>
<div class="ba" style="left:1462px;top:776px;width:14px"><b>N</b><i style="left:0px;width:1.6px"></i><i style="left:3.8px;width:5.2px"></i></div>
<div class="ba" style="left:1476px;top:776px;width:16px"><b>N</b><i style="left:3.9px;width:3.5px"></i><i style="left:9.6px;width:2.2px"></i></div>
<div class="ba" style="left:1492px;top:776px;width:14px"><b>N</b><i style="left:0px;width:1.6px"></i><i style="left:3.8px;width:5.2px"></i></div>
<div class="ba" style="left:1506px;top:776px;width:16px"><b>N</b><i style="left:3.9px;width:3.5px"></i><i style="left:9.6px;width:2.2px"></i></div>
<div class="ba" style="left:1522px;top:776px;width:14px"><b>N</b><i style="left:0px;width:1.6px"></i><i style="left:3.8px;width:5.2px"></i></div>
<div class="ba" style="left:1536px;top:776px;width:16px"><b>N</b><i style="left:3.9px;width:3.5px"></i><i style="left:9.6px;width:2.2px"></i></div>
<div class="ba" style="left:1552px;top:776px;width:14px"><b>N</b><i style="left:0px;width:1.6px"></i><i style="left:3.8px;width:5.2px"></i></div>
<div class="ba" style="left:1566px;top:776px;width:16px"><b>N</b><i style="left:3.9px;width:3.5px"></i><i style="left:9.6px;width:2.2px"></i></div>
<div class="ba" style="left:1582px;top:776px;width:14px"><b>N</b><i style="left:0px;width:1.6px"></i><i style="left:3.8px;width:5.2px"></i></div>
<div class="ba" style="left:1596px;top:776px;width:16px"><b>N</b><i style="left:3.9px;width:3.5px"></i><i style="left:9.6px;width:2.2px"></i></div>
<div class="ba" style="left:1612px;top:776px;width:14px"><b>N</b><i style="left:0px;width:1.6px"></i><i style="left:3.8px;width:5.2px"></i></div>
<div class="ba" style="left:1626px;top:776px;width:16px"><b>N</b><i style="left:3.9px;width:3.5px"></i><i style="left:9.6px;width:2.2px"></i></div>
<div class="ba" style="left:1642px;top:776px;width:14px"><b>N</b><i style="left:0px;width:1.6px"></i><i style="left:3.8px;width:5.2px"></i></div>
<div class="ba" style="left:1656px;top:776px;width:16px"><b>N</b><i style="left:3.9px;width:3.5px"></i><i style="left:9.6px;width:2.2px"></i></div>
<div class="ba" style="left:1686px;top:776px;width:14px"><b>N</b><i style="left:3.9px;width:3.5px"></i><i style="left:9.6px;width:2.2px"></i></div>
<div class="ba" style="left:1700px;top:776px;width:16px"><b>N</b><i style="left:0px;width:1.6px"></i><i style="left:3.8px;width:5.2px"></i><i style="left:11.2px;width:2px"></i></div>
<div class="ba" style="left:1716px;top:776px;width:14px"><b>N</b><i style="left:3.9px;width:3.5px"></i><i style="left:9.6px;width:2.2px"></i></div>
<div class="ba" style="left:1730px;top:776px;width:16px"><b>N</b><i style="left:0px;width:1.6px"></i><i style="left:3.8px;width:5.2px"></i><i style="left:11.2px;width:2px"></i></div>
<div class="ba" style="left:1746px;top:776px;width:14px"><b>N</b><i style="left:3.9px;width:3.5px"></i><i style="left:9.6px;width:2.2px"></i></div>
<div class="ba" style="left:1760px;top:776px;width:16px"><b>N</b><i style="left:0px;width:1.6px"></i><i style="left:3.8px;width:5.2px"></i><i style="left:11.2px;width:2px"></i></div>
<div class="ba" style="left:1776px;top:776px;width:14px"><b>N</b><i style="left:3.9px;width:3.5px"></i><i style="left:9.6px;width:2.2px"></i></div>
<div class="ba" style="left:1806px;top:776px;width:14px"><b>N</b><i style="left:3.9px;width:3.5px"></i><i style="left:9.6px;width:2.2px"></i></div>
<div class="ba" style="left:1820px;top:776px;width:16px"><b>N</b><i style="left:0px;width:1.6px"></i><i style="left:3.8px;width:5.2px"></i><i style="left:11.2px;width:2px"></i></div>
<div class="ba" style="left:1836px;top:776px;width:14px"><b>N</b><i style="left:3.9px;width:3.5px"></i><i style="left:9.6px;width:2.2px"></i></div>
<div class="ba" style="left:1850px;top:776px;width:16px"><b>N</b><i style="left:0px;width:1.6px"></i><i style="left:3.8px;width:5.2px"></i><i style="left:11.2px;width:2px"></i></div>
<div class="ba" style="left:1866px;top:776px;width:14px"><b>N</b><i style="left:3.9px;width:3.5px"></i><i style="left:9.6px;width:2.2px"></i></div>
<div class="ba" style="left:1880px;top:776px;width:16px"><b>N</b><i style="left:0px;width:1.6px"></i><i style="left:3.8px;width:5.2px"></i><i style="left:11.2px;width:2px"></i></div>
<div class="ba" style="left:1896px;top:776px;width:14px"><b>N</b><i style="left:3.9px;width:3.5px"></i><i style="left:9.6px;width:2.2px"></i></div>
<div class="ba" style="left:1910px;top:776px;width:16px"><b>N</b><i style="left:0px;width:1.6px"></i><i style="left:3.8px;width:5.2px"></i><i style="left:11.2px;width:2px"></i></div>
<div class="ba" style="left:1926px;top:776px;width:14px"><b>N</b><i style="left:3.9px;width:3.5px"></i><i style="left:9.6px;width:2.2px"></i></div>
<div class="ba" style="left:1940px;top:776px;width:16px"><b>N</b><i style="left:0px;width:1.6px"></i><i style="left:3.8px;width:5.2px"></i><i style="left:11.2px;width:2px"></i></div>
<div class="ba" style="left:1956px;top:776px;width:14px"><b>N</b><i style="left:3.9px;width:3.5px"></i><i style="left:9.6px;width:2.2px"></i></div>
<div class="ba" style="left:1970px;top:776px;width:16px"><b>N</b><i style="left:0px;width:1.6px"></i><i style="left:3.8px;width:5.2px"></i><i style="left:11.2px;width:2px"></i></div>
<div class="ba" style="left:1986px;top:776px;width:14px"><b>N</b><i style="left:3.9px;width:3.5px"></i><i style="left:9.6px;width:2.2px"></i></div>
<div class="ba" style="left:2000px;top:776px;width:16px"><b>N</b><i style="left:0px;width:1.6px"></i><i style="left:3.8px;width:5.2px"></i><i style="left:11.2px;width:2px"></i></div>
<div class="ba" style="left:2016px;top:776px;width:14px"><b>N</b><i style="left:3.9px;width:3.5px"></i><i style="left:9.6px;width:2.2px"></i></div>
<div class="ba" style="left:2030px;top:776px;width:16px"><b>N</b><i style="left:0px;width:1.6px"></i><i style="left:3.8px;width:5.2px"></i><i style="left:11.2px;width:2px"></i></div>
<div class="ba" style="left:2046px;top:776px;width:14px"><b>N</b><i style="left:3.9px;width:3.5px"></i><i style="left:9.6px;width:2.2px"></i></div>
<div class="ba" style="left:2060px;top:776px;width:16px"><b>N</b><i style="left:0px;width:1.6px"></i><i style="left:3.8px;width:5.2px"></i><i style="left:11.2px;width:2px"></i></div>
<div class="ba" style="left:2076px;top:776px;width:14px"><b>N</b><i style="left:3.9px;width:3.5px"></i><i style="left:9.6px;width:2.2px"></i></div>
<div class="ba" style="left:2090px;top:776px;width:14px"><b>N</b><i style="left:0px;width:1.6px"></i><i style="left:3.8px;width:5.2px"></i></div>
<div class="ba" style="left:2104px;top:776px;width:16px"><b>N</b><i style="left:3.9px;width:3.5px"></i><i style="left:9.6px;width:2.2px"></i></div>
<div class="ba" style="left:2120px;top:776px;width:14px"><b>N</b><i style="left:0px;width:1.6px"></i><i style="left:3.8px;width:5.2px"></i></div>
<div class="ba" style="left:2134px;top:776px;width:16px"><b>N</b><i style="left:3.9px;width:3.5px"></i><i style="left:9.6px;width:2.2px"></i></div>
<div class="ba" style="left:594px;top:776px;width:8px"><b>N</b><i style="left:0px;width:1.6px"></i></div>
<div class="ba" style="left:1790px;top:776px;width:12px"><b>N</b><i style="left:0px;width:1.6px"></i><i style="left:3.8px;width:5.2px"></i></div>
<div class="ba" style="left:2150px;top:776px;width:12px"><b>N</b><i style="left:0px;width:1.6px"></i><i style="left:3.8px;width:5.2px"></i></div>
<div class="c gr" style="left:10px;top:850px;width:120px;height:34px;">4A - 85 - TAMB</div>
<div class="c gr" style="left:130px;top:850px;width:120px;height:34px;">4A - 85 - TAMB</div>
<div class="c gr" style="left:250px;top:850px;width:120px;height:34px;">4A - 85 - TAMB</div>
<div class="c gr" style="left:370px;top:850px;width:104px;height:34px;">4A - 85 - TAMB</div>
<div class="c gr" style="left:488px;top:850px;width:120px;height:34px;">4A - 85 - TAMB</div>
<div class="c gr" style="left:608px;top:850px;width:120px;height:34px;">4A - 85 - TAMB</div>
<div class="c gr" style="left:848px;top:850px;width:104px;height:34px;">4A - 85 - TAMB</div>
<div class="c gr" style="left:968px;top:850px;width:120px;height:34px;">4A - 85 - TAMB</div>
<div class="c gr" style="left:1088px;top:850px;width:120px;height:34px;">4A - 85 - TAMB</div>
<div class="c gr" style="left:1208px;top:850px;width:118px;height:34px;">4A - 85 - TAMB</div>
<div class="c gr" style="left:1326px;top:850px;width:120px;height:34px;">4A - 85 - TAMB</div>
<div class="c gr" style="left:1446px;top:850px;width:120px;height:34px;">4A - 85 - TAMB</div>
<div class="c gr" style="left:1566px;top:850px;width:60px;height:34px;">4A - 85 - TAMB</div>
<div class="c gr" style="left:1686px;top:850px;width:120px;height:34px;">4A - 85 - TAMB</div>
<div class="c gr" style="left:1806px;top:850px;width:120px;height:34px;">4A - 85 - TAMB</div>
<div class="c gr" style="left:1926px;top:850px;width:120px;height:34px;">4A - 85 - TAMB</div>
<div class="c gr" style="left:2046px;top:850px;width:118px;height:34px;">4A - 85 - TAMB</div>
<div class="c gr" style="left:2164px;top:850px;width:120px;height:34px;">4A - 85 - TAMB</div>
<div class="c gr" style="left:2284px;top:850px;width:120px;height:34px;">4A - 85 - TAMB</div>
<div class="c gr" style="left:1626px;top:850px;width:4px;height:34px;;padding:0"></div>
<div class="c gr" style="left:1630px;top:850px;width:4px;height:34px;;padding:0"></div>
<div class="c gr" style="left:1634px;top:850px;width:4px;height:34px;;padding:0"></div>
<div class="c gr" style="left:1638px;top:850px;width:4px;height:34px;;padding:0"></div>
<div class="c gr" style="left:1644px;top:850px;width:4px;height:34px;;padding:0"></div>
<div class="c gr" style="left:1648px;top:850px;width:4px;height:34px;;padding:0"></div>
<div class="c gr" style="left:1652px;top:850px;width:4px;height:34px;;padding:0"></div>
<div class="c grd" style="left:1642px;top:850px;width:2px;height:34px;;padding:0"></div>
<div class="c grd" style="left:1656px;top:850px;width:16px;height:34px;;padding:0"></div>
<div class="c gr" style="left:10px;top:888px;width:120px;height:34px;">4A - 85 - TAMB</div>
<div class="c gr" style="left:130px;top:888px;width:120px;height:34px;">4A - 85 - TAMB</div>
<div class="c gr" style="left:250px;top:888px;width:120px;height:34px;">4A - 85 - TAMB</div>
<div class="c gr" style="left:370px;top:888px;width:104px;height:34px;">4A - 85 - TAMB</div>
<div class="c gr" style="left:488px;top:888px;width:120px;height:34px;">4A - 85 - TAMB</div>
<div class="c gr" style="left:608px;top:888px;width:120px;height:34px;">4A - 85 - TAMB</div>
<div class="c gr" style="left:728px;top:888px;width:120px;height:34px;">4A - 85 - TAMB</div>
<div class="c gr" style="left:848px;top:888px;width:104px;height:34px;">4A - 85 - TAMB</div>
<div class="c gr" style="left:968px;top:888px;width:120px;height:34px;">4A - 85 - TAMB</div>
<div class="c gr" style="left:1088px;top:888px;width:120px;height:34px;">4A - 85 - TAMB</div>
<div class="c gr" style="left:1208px;top:888px;width:118px;height:34px;">4A - 85 - TAMB</div>
<div class="c gr" style="left:1326px;top:888px;width:120px;height:34px;">4A - 85 - TAMB</div>
<div class="c gr" style="left:1446px;top:888px;width:120px;height:34px;">4A - 85 - TAMB</div>
<div class="c gr" style="left:1566px;top:888px;width:106px;height:34px;">4A - 85 - TAMB</div>
<div class="c gr" style="left:1686px;top:888px;width:120px;height:34px;">4A - 85 - TAMB</div>
<div class="c gr" style="left:1806px;top:888px;width:120px;height:34px;">4A - 85 - TAMB</div>
<div class="c gr" style="left:1926px;top:888px;width:120px;height:34px;">4A - 85 - TAMB</div>
<div class="c gr" style="left:2046px;top:888px;width:118px;height:34px;">4A - 85 - TAMB</div>
<div class="c gr" style="left:2164px;top:888px;width:120px;height:34px;">4A - 85 - TAMB</div>
<div class="c gr" style="left:2284px;top:888px;width:120px;height:34px;">4A - 85 - TAMB</div>
<div class="c gr" style="left:10px;top:926px;width:120px;height:34px;">4A - 87 - TAMB</div>
<div class="c gr" style="left:130px;top:926px;width:120px;height:34px;">4A - 87 - TAMB</div>
<div class="c gr" style="left:250px;top:926px;width:120px;height:34px;">4A - 87 - TAMB</div>
<div class="c gr" style="left:370px;top:926px;width:104px;height:34px;">4A - 87 - TAMB</div>
<div class="c gr" style="left:488px;top:926px;width:120px;height:34px;">4A - 87 - TAMB</div>
<div class="c gr" style="left:608px;top:926px;width:120px;height:34px;">4A - 87 - TAMB</div>
<div class="c gr" style="left:968px;top:926px;width:120px;height:34px;">4A - 87 - TAMB</div>
<div class="c gr" style="left:1088px;top:926px;width:120px;height:34px;">4A - 87 - TAMB</div>
<div class="c gr" style="left:1208px;top:926px;width:118px;height:34px;">4A - 87 - TAMB</div>
<div class="c gr" style="left:1326px;top:926px;width:120px;height:34px;">4A - 87 - TAMB</div>
<div class="c gr" style="left:1446px;top:926px;width:120px;height:34px;">4A - 87 - TAMB</div>
<div class="c gr" style="left:1566px;top:926px;width:106px;height:34px;">4A - 87 - TAMB</div>
<div class="c gr" style="left:1686px;top:926px;width:120px;height:34px;">4A - 87 - TAMB</div>
<div class="c gr" style="left:1806px;top:926px;width:120px;height:34px;">4A - 87 - TAMB</div>
<div class="c gr" style="left:1926px;top:926px;width:120px;height:34px;">4A - 87 - TAMB</div>
<div class="c gr" style="left:2046px;top:926px;width:118px;height:34px;">4A - 87 - TAMB</div>
<div class="c gr" style="left:2164px;top:926px;width:120px;height:34px;">4A - 87 - TAMB</div>
<div class="c gr" style="left:2284px;top:926px;width:120px;height:34px;">4A - 87 - TAMB</div>
<div class="c gr" style="left:10px;top:964px;width:30px;height:34px;">4A</div>
<div class="c gr" style="left:40px;top:964px;width:30px;height:34px;">4A</div>
<div class="c gr" style="left:70px;top:964px;width:30px;height:34px;">4A</div>
<div class="c gr" style="left:100px;top:964px;width:30px;height:34px;">4A</div>
<div class="c gr" style="left:130px;top:964px;width:30px;height:34px;">4A</div>
<div class="c gr" style="left:160px;top:964px;width:30px;height:34px;">4A</div>
<div class="c gr" style="left:190px;top:964px;width:30px;height:34px;">4A</div>
<div class="c gr" style="left:220px;top:964px;width:30px;height:34px;">4A</div>
<div class="c gr" style="left:250px;top:964px;width:30px;height:34px;">4A</div>
<div class="c gr" style="left:280px;top:964px;width:30px;height:34px;">4A</div>
<div class="c gr" style="left:310px;top:964px;width:30px;height:34px;">4A</div>
<div class="c gr" style="left:340px;top:964px;width:30px;height:34px;">4A</div>
<div class="c gr" style="left:370px;top:964px;width:30px;height:34px;">4A</div>
<div class="c gr" style="left:400px;top:964px;width:28px;height:34px;">4A</div>
<div class="c gr" style="left:428px;top:964px;width:30px;height:34px;">4A</div>
<div class="c gr" style="left:458px;top:964px;width:16px;height:34px;">4A</div>
<div class="c gr" style="left:488px;top:964px;width:30px;height:34px;">4A</div>
<div class="c gr" style="left:518px;top:964px;width:30px;height:34px;">4A</div>
<div class="c gr" style="left:548px;top:964px;width:30px;height:34px;">4A</div>
<div class="c gr" style="left:578px;top:964px;width:30px;height:34px;">4A</div>
<div class="c gr" style="left:608px;top:964px;width:30px;height:34px;">4A</div>
<div class="c gr" style="left:638px;top:964px;width:30px;height:34px;">4A</div>
<div class="c gr" style="left:668px;top:964px;width:30px;height:34px;">4A</div>
<div class="c gr" style="left:698px;top:964px;width:30px;height:34px;">4A</div>
<div class="c gr" style="left:728px;top:964px;width:30px;height:34px;">4A</div>
<div class="c gr" style="left:758px;top:964px;width:30px;height:34px;">4A</div>
<div class="c gr" style="left:788px;top:964px;width:30px;height:34px;">4A</div>
<div class="c gr" style="left:818px;top:964px;width:30px;height:34px;">4A</div>
<div class="c gr" style="left:848px;top:964px;width:30px;height:34px;">4A</div>
<div class="c gr" style="left:878px;top:964px;width:30px;height:34px;">4A</div>
<div class="c gr" style="left:908px;top:964px;width:30px;height:34px;">4A</div>
<div class="c gr" style="left:938px;top:964px;width:14px;height:34px;">4A</div>
<div class="c gr" style="left:968px;top:964px;width:30px;height:34px;">4A</div>
<div class="c gr" style="left:998px;top:964px;width:30px;height:34px;">4A</div>
<div class="c gr" style="left:1028px;top:964px;width:30px;height:34px;">4A</div>
<div class="c gr" style="left:1058px;top:964px;width:30px;height:34px;">4A</div>
<div class="c gr" style="left:1088px;top:964px;width:30px;height:34px;">4A</div>
<div class="c gr" style="left:1118px;top:964px;width:30px;height:34px;">4A</div>
<div class="c gr" style="left:1148px;top:964px;width:30px;height:34px;">4A</div>
<div class="c gr" style="left:1178px;top:964px;width:30px;height:34px;">4A</div>
<div class="c gr" style="left:1208px;top:964px;width:30px;height:34px;">4A</div>
<div class="c gr" style="left:1238px;top:964px;width:28px;height:34px;">4A</div>
<div class="c gr" style="left:1266px;top:964px;width:30px;height:34px;">4A</div>
<div class="c gr" style="left:1296px;top:964px;width:30px;height:34px;">4A</div>
<div class="c gr" style="left:1326px;top:964px;width:30px;height:34px;">4A</div>
<div class="c gr" style="left:1356px;top:964px;width:30px;height:34px;">4A</div>
<div class="c gr" style="left:1386px;top:964px;width:30px;height:34px;">4A</div>
<div class="c gr" style="left:1416px;top:964px;width:30px;height:34px;">4A</div>
<div class="c gr" style="left:1446px;top:964px;width:30px;height:34px;">4A</div>
<div class="c gr" style="left:1476px;top:964px;width:30px;height:34px;">4A</div>
<div class="c gr" style="left:1506px;top:964px;width:30px;height:34px;">4A</div>
<div class="c gr" style="left:1536px;top:964px;width:30px;height:34px;">4A</div>
<div class="c gr" style="left:1566px;top:964px;width:30px;height:34px;">4A</div>
<div class="c gr" style="left:1596px;top:964px;width:30px;height:34px;">4A</div>
<div class="c gr" style="left:1626px;top:964px;width:30px;height:34px;">4A</div>
<div class="c gr" style="left:1656px;top:964px;width:16px;height:34px;">4A</div>
<div class="c gr" style="left:1686px;top:964px;width:30px;height:34px;">4A</div>
<div class="c gr" style="left:1716px;top:964px;width:30px;height:34px;">4A</div>
<div class="c gr" style="left:1746px;top:964px;width:30px;height:34px;">4A</div>
<div class="c gr" style="left:1776px;top:964px;width:30px;height:34px;">4A</div>
<div class="c gr" style="left:1806px;top:964px;width:30px;height:34px;">4A</div>
<div class="c gr" style="left:1836px;top:964px;width:30px;height:34px;">4A</div>
<div class="c gr" style="left:1866px;top:964px;width:30px;height:34px;">4A</div>
<div class="c gr" style="left:1896px;top:964px;width:30px;height:34px;">4A</div>
<div class="c gr" style="left:1926px;top:964px;width:30px;height:34px;">4A</div>
<div class="c gr" style="left:1956px;top:964px;width:30px;height:34px;">4A</div>
<div class="c gr" style="left:1986px;top:964px;width:30px;height:34px;">4A</div>
<div class="c gr" style="left:2016px;top:964px;width:30px;height:34px;">4A</div>
<div class="c gr" style="left:2046px;top:964px;width:30px;height:34px;">4A</div>
<div class="c gr" style="left:2076px;top:964px;width:28px;height:34px;">4A</div>
<div class="c gr" style="left:2104px;top:964px;width:30px;height:34px;">4A</div>
<div class="c gr" style="left:2134px;top:964px;width:30px;height:34px;">4A</div>
<div class="c gr" style="left:2164px;top:964px;width:30px;height:34px;">4A</div>
<div class="c gr" style="left:2194px;top:964px;width:30px;height:34px;">4A</div>
<div class="c gr" style="left:2224px;top:964px;width:30px;height:34px;">4A</div>
<div class="c gr" style="left:2254px;top:964px;width:30px;height:34px;">4A</div>
<div class="c gr" style="left:2284px;top:964px;width:30px;height:34px;">4A</div>
<div class="c gr" style="left:2314px;top:964px;width:30px;height:34px;">4A</div>
<div class="c gr" style="left:2344px;top:964px;width:30px;height:34px;">4A</div>
<div class="c gr" style="left:2374px;top:964px;width:30px;height:34px;">4A</div>
<div class="sn" style="left:616px;top:1002px;width:2px"></div>
<div class="sn" style="left:630px;top:1002px;width:2px"></div>
<div class="sn" style="left:634px;top:1002px;width:4px"></div>
<div class="sn" style="left:646px;top:1002px;width:2px"></div>
<div class="sn" style="left:660px;top:1002px;width:2px"></div>
<div class="sn" style="left:664px;top:1002px;width:4px"></div>
<div class="sn" style="left:676px;top:1002px;width:2px"></div>
<div class="sn" style="left:690px;top:1002px;width:2px"></div>
<div class="sn" style="left:694px;top:1002px;width:4px"></div>
<div class="sn" style="left:706px;top:1002px;width:2px"></div>
<div class="sn" style="left:720px;top:1002px;width:2px"></div>
<div class="sn" style="left:724px;top:1002px;width:4px"></div>
<div class="sn" style="left:974px;top:1002px;width:2px"></div>
<div class="sn" style="left:990px;top:1002px;width:6px"></div>
<div class="sn" style="left:1004px;top:1002px;width:2px"></div>
<div class="sn" style="left:1020px;top:1002px;width:6px"></div>
<div class="sn" style="left:1034px;top:1002px;width:2px"></div>
<div class="sn" style="left:1050px;top:1002px;width:6px"></div>
<div class="sn" style="left:1064px;top:1002px;width:2px"></div>
<div class="sn" style="left:1080px;top:1002px;width:6px"></div>
<div class="sn" style="left:1094px;top:1002px;width:2px"></div>
<div class="sn" style="left:1108px;top:1002px;width:2px"></div>
<div class="sn" style="left:1112px;top:1002px;width:4px"></div>
<div class="sn" style="left:1124px;top:1002px;width:2px"></div>
<div class="sn" style="left:1138px;top:1002px;width:2px"></div>
<div class="sn" style="left:1142px;top:1002px;width:4px"></div>
<div class="sn" style="left:1154px;top:1002px;width:2px"></div>
<div class="sn" style="left:1168px;top:1002px;width:2px"></div>
<div class="sn" style="left:1172px;top:1002px;width:4px"></div>
<div class="sn" style="left:1184px;top:1002px;width:2px"></div>
<div class="sn" style="left:1198px;top:1002px;width:2px"></div>
<div class="sn" style="left:1202px;top:1002px;width:4px"></div>
<div class="sn" style="left:1692px;top:1002px;width:2px"></div>
<div class="sn" style="left:1708px;top:1002px;width:2px"></div>
<div class="sn" style="left:1712px;top:1002px;width:4px"></div>
<div class="sn" style="left:1722px;top:1002px;width:2px"></div>
<div class="sn" style="left:1738px;top:1002px;width:2px"></div>
<div class="sn" style="left:1742px;top:1002px;width:4px"></div>
<div class="sn" style="left:1752px;top:1002px;width:2px"></div>
<div class="sn" style="left:1768px;top:1002px;width:2px"></div>
<div class="sn" style="left:1772px;top:1002px;width:4px"></div>
<div class="sn" style="left:1782px;top:1002px;width:2px"></div>
<div class="sn" style="left:1798px;top:1002px;width:2px"></div>
<div class="sn" style="left:1802px;top:1002px;width:4px"></div>
<div class="sn" style="left:1812px;top:1002px;width:2px"></div>
<div class="sn" style="left:1828px;top:1002px;width:6px"></div>
<div class="sn" style="left:1842px;top:1002px;width:2px"></div>
<div class="sn" style="left:1858px;top:1002px;width:6px"></div>
<div class="sn" style="left:1872px;top:1002px;width:2px"></div>
<div class="sn" style="left:1888px;top:1002px;width:6px"></div>
<div class="sn" style="left:1902px;top:1002px;width:2px"></div>
<div class="sn" style="left:1918px;top:1002px;width:6px"></div>
<div class="sn" style="left:1932px;top:1002px;width:2px"></div>
<div class="sn" style="left:1946px;top:1002px;width:2px"></div>
<div class="sn" style="left:1950px;top:1002px;width:4px"></div>
<div class="sn" style="left:1962px;top:1002px;width:2px"></div>
<div class="sn" style="left:1976px;top:1002px;width:2px"></div>
<div class="sn" style="left:1980px;top:1002px;width:4px"></div>
<div class="sn" style="left:1992px;top:1002px;width:2px"></div>
<div class="sn" style="left:2006px;top:1002px;width:2px"></div>
<div class="sn" style="left:2010px;top:1002px;width:4px"></div>
<div class="sn" style="left:2022px;top:1002px;width:2px"></div>
<div class="sn" style="left:2036px;top:1002px;width:2px"></div>
<div class="sn" style="left:2040px;top:1002px;width:4px"></div>
<div class="sn" style="left:2052px;top:1002px;width:2px"></div>
<div class="sn" style="left:2066px;top:1002px;width:2px"></div>
<div class="sn" style="left:2070px;top:1002px;width:4px"></div>
<div class="sn" style="left:2082px;top:1002px;width:2px"></div>
<div class="sn" style="left:2096px;top:1002px;width:2px"></div>
<div class="sn" style="left:2100px;top:1002px;width:4px"></div>
<div class="sn" style="left:2112px;top:1002px;width:2px"></div>
<div class="sn" style="left:2126px;top:1002px;width:2px"></div>
<div class="sn" style="left:2130px;top:1002px;width:4px"></div>
<div class="sn" style="left:2142px;top:1002px;width:2px"></div>
<div class="sn" style="left:2156px;top:1002px;width:2px"></div>
<div class="sn" style="left:2160px;top:1002px;width:4px"></div>
<div class="sn" style="left:2172px;top:1002px;width:2px"></div>
<div class="sn" style="left:2186px;top:1002px;width:2px"></div>
<div class="sn" style="left:2190px;top:1002px;width:4px"></div>
<div class="sn" style="left:2202px;top:1002px;width:2px"></div>
<div class="sn" style="left:2216px;top:1002px;width:2px"></div>
<div class="sn" style="left:2220px;top:1002px;width:4px"></div>
<div class="sn" style="left:2232px;top:1002px;width:2px"></div>
<div class="sn" style="left:2246px;top:1002px;width:2px"></div>
<div class="sn" style="left:2250px;top:1002px;width:4px"></div>
<div class="sn" style="left:2262px;top:1002px;width:2px"></div>
<div class="sn" style="left:2276px;top:1002px;width:2px"></div>
<div class="sn" style="left:2280px;top:1002px;width:4px"></div>
<div class="sn" style="left:2292px;top:1002px;width:2px"></div>
<div class="sn" style="left:2306px;top:1002px;width:2px"></div>
<div class="sn" style="left:2310px;top:1002px;width:4px"></div>
<div class="sn" style="left:2322px;top:1002px;width:2px"></div>
<div class="sn" style="left:2336px;top:1002px;width:2px"></div>
<div class="sn" style="left:2340px;top:1002px;width:4px"></div>
<div class="sn" style="left:2352px;top:1002px;width:2px"></div>
<div class="sn" style="left:2366px;top:1002px;width:2px"></div>
<div class="sn" style="left:2370px;top:1002px;width:4px"></div>
<div class="sn" style="left:2382px;top:1002px;width:2px"></div>
<div class="sn" style="left:2396px;top:1002px;width:2px"></div>
<div class="sn" style="left:2400px;top:1002px;width:4px"></div>
<div class="c gr" style="left:482px;top:1040px;width:6px;height:34px;;padding:0"></div>
<div class="c gr" style="left:602px;top:1040px;width:6px;height:34px;;padding:0"></div>
<div class="c gr" style="left:962px;top:1040px;width:6px;height:34px;;padding:0"></div>
<div class="c gr" style="left:1678px;top:1040px;width:8px;height:34px;;padding:0"></div>
<div class="c gr" style="left:370px;top:1078px;width:118px;height:34px;"><i class="gl"></i><i class="gr2"></i>UNISON_VO</div>
<div class="c gr" style="left:848px;top:1078px;width:104px;height:34px;"><i class="gl"></i><i class="gr2"></i>UNISON_V</div>
<div class="c gr" style="left:1446px;top:1078px;width:16px;height:34px;"><i class="gl" style="width:3px"></i><i class="gr2" style="width:5px"></i>U</div>
<div class="c gr" style="left:1462px;top:1078px;width:14px;height:34px;"><i class="gl" style="width:3px"></i><i class="gr2" style="width:5px"></i>U</div>
<div class="c gr" style="left:1476px;top:1078px;width:16px;height:34px;"><i class="gl" style="width:3px"></i><i class="gr2" style="width:5px"></i>U</div>
<div class="c gr" style="left:1492px;top:1078px;width:14px;height:34px;"><i class="gl" style="width:3px"></i><i class="gr2" style="width:5px"></i>U</div>
<div class="c gr" style="left:1506px;top:1078px;width:16px;height:34px;"><i class="gl" style="width:3px"></i><i class="gr2" style="width:5px"></i>U</div>
<div class="c gr" style="left:1522px;top:1078px;width:14px;height:34px;"><i class="gl" style="width:3px"></i><i class="gr2" style="width:5px"></i>U</div>
<div class="c gr" style="left:1536px;top:1078px;width:16px;height:34px;"><i class="gl" style="width:3px"></i><i class="gr2" style="width:5px"></i>U</div>
<div class="c gr" style="left:1552px;top:1078px;width:14px;height:34px;"><i class="gl" style="width:3px"></i><i class="gr2" style="width:5px"></i>U</div>
<div class="c gr" style="left:1566px;top:1078px;width:106px;height:34px;"><i class="gl"></i><i class="gr2"></i>UNISON_V</div>
<div class="c grd" style="left:1446px;top:1116px;width:226px;height:34px;;padding:0"></div>
<div class="c gr" style="left:10px;top:1154px;width:60px;height:34px;"><i class="gl"></i><i class="gr2"></i>SPINN</div>
<div class="c gr" style="left:130px;top:1154px;width:60px;height:34px;"><i class="gl"></i><i class="gr2"></i>SPINN</div>
<div class="c gr" style="left:250px;top:1154px;width:60px;height:34px;"><i class="gl"></i><i class="gr2"></i>SPINN</div>
<div class="c gr" style="left:370px;top:1154px;width:58px;height:34px;"><i class="gl"></i><i class="gr2"></i>SPINN</div>
<div class="c gr" style="left:728px;top:1154px;width:60px;height:34px;"><i class="gl"></i><i class="gr2"></i>SPINN</div>
<div class="c gr" style="left:1208px;top:1154px;width:58px;height:34px;"><i class="gl"></i><i class="gr2"></i>SPINN</div>
<div class="c gr" style="left:1326px;top:1154px;width:60px;height:34px;"><i class="gl"></i><i class="gr2"></i>SPINN</div>
<div class="c gr" style="left:1446px;top:1154px;width:60px;height:34px;"><i class="gl"></i><i class="gr2"></i>SPINN</div>
<div class="c gr" style="left:1686px;top:1154px;width:60px;height:34px;"><i class="gl"></i><i class="gr2"></i>SPINN</div>
<div class="c gr" style="left:1806px;top:1154px;width:60px;height:34px;"><i class="gl"></i><i class="gr2"></i>SPINN</div>
<div class="c gr" style="left:1926px;top:1154px;width:60px;height:34px;"><i class="gl"></i><i class="gr2"></i>SPINN</div>
<div class="c gr" style="left:2164px;top:1154px;width:60px;height:34px;"><i class="gl"></i><i class="gr2"></i>SPINN</div>
<div class="c gr" style="left:2284px;top:1154px;width:60px;height:34px;"><i class="gl"></i><i class="gr2"></i>SPINN</div>
<div class="c gr" style="left:848px;top:1154px;width:30px;height:34px;"><i class="gl"></i><i class="gr2"></i>SP</div>
<div class="c gr" style="left:878px;top:1154px;width:30px;height:34px;"><i class="gl"></i><i class="gr2"></i>SP</div>
<div class="c gr" style="left:1506px;top:1154px;width:30px;height:34px;"><i class="gl"></i><i class="gr2"></i>SP</div>
<div class="c gr" style="left:1536px;top:1154px;width:30px;height:34px;"><i class="gl"></i><i class="gr2"></i>SP</div>
<div class="c gr" style="left:1566px;top:1154px;width:30px;height:34px;"><i class="gl"></i><i class="gr2"></i>SP</div>
<div class="c gr" style="left:1596px;top:1154px;width:30px;height:34px;"><i class="gl"></i><i class="gr2"></i>SP</div>
<div class="c gr" style="left:908px;top:1154px;width:14px;height:34px;"><i class="gl" style="width:3px"></i><i class="gr2" style="width:5px"></i>S</div>
<div class="c gr" style="left:922px;top:1154px;width:16px;height:34px;"><i class="gl" style="width:3px"></i><i class="gr2" style="width:5px"></i>S</div>
<div class="c gr" style="left:1626px;top:1154px;width:16px;height:34px;"><i class="gl" style="width:3px"></i><i class="gr2" style="width:5px"></i>S</div>
<div class="c gr" style="left:1642px;top:1154px;width:14px;height:34px;"><i class="gl" style="width:3px"></i><i class="gr2" style="width:5px"></i>S</div>
<div class="c gr" style="left:938px;top:1154px;width:8px;height:34px;;padding:0"><i class="gr2" style="width:4px"></i></div>
<div class="c gr" style="left:946px;top:1154px;width:6px;height:34px;;padding:0"><i class="gr2" style="width:4px"></i></div>
<div class="c gr" style="left:1656px;top:1154px;width:8px;height:34px;;padding:0"><i class="gr2" style="width:4px"></i></div>
<div class="c gr" style="left:1664px;top:1154px;width:8px;height:34px;;padding:0"><i class="gr2" style="width:4px"></i></div>
<div class="c gr" style="left:1088px;top:1192px;width:60px;height:34px;">Kit_5_</div>
<div class="c gr" style="left:1148px;top:1192px;width:60px;height:34px;">Kit_5_</div>
<div class="c gr" style="left:1446px;top:1192px;width:60px;height:34px;">Kit_5_</div>
<div class="c gr" style="left:1506px;top:1192px;width:60px;height:34px;">Kit_5_</div>
<div class="c gr" style="left:1566px;top:1192px;width:60px;height:34px;">Kit_5_</div>
<div class="c gr" style="left:1686px;top:1192px;width:60px;height:34px;">Kit_5_</div>
<div class="c gr" style="left:1746px;top:1192px;width:60px;height:34px;">Kit_5_</div>
<div class="c gr" style="left:1806px;top:1192px;width:60px;height:34px;">Kit_5_</div>
<div class="c gr" style="left:1866px;top:1192px;width:60px;height:34px;">Kit_5_</div>
<div class="c gr" style="left:1926px;top:1192px;width:60px;height:34px;">Kit_5_</div>
<div class="c gr" style="left:1986px;top:1192px;width:60px;height:34px;">Kit_5_</div>
<div class="c gr" style="left:2046px;top:1192px;width:58px;height:34px;">Kit_5_</div>
<div class="c gr" style="left:2104px;top:1192px;width:60px;height:34px;">Kit_5_</div>
<div class="c gr" style="left:2164px;top:1192px;width:60px;height:34px;">Kit_5_</div>
<div class="c gr" style="left:2224px;top:1192px;width:60px;height:34px;">Kit_5_</div>
<div class="c gr" style="left:2284px;top:1192px;width:60px;height:34px;">Kit_5_</div>
<div class="c gr" style="left:2344px;top:1192px;width:60px;height:34px;">Kit_5_</div>
<div class="c gr" style="left:1626px;top:1192px;width:46px;height:34px;">Kit_</div>
<div class="c wh" style="left:608px;top:1230px;width:6px;height:34px;border-right:0;padding:0"></div>
<div class="c wh" style="left:668px;top:1230px;width:6px;height:34px;border-right:0;padding:0"></div>
<div class="c wh" style="left:728px;top:1230px;width:6px;height:34px;border-right:0;padding:0"></div>
<div class="c wh" style="left:788px;top:1230px;width:6px;height:34px;border-right:0;padding:0"></div>
<div class="c wh" style="left:848px;top:1230px;width:6px;height:34px;border-right:0;padding:0"></div>
<div class="c wh" style="left:908px;top:1230px;width:6px;height:34px;border-right:0;padding:0"></div>
<div class="c wh" style="left:1088px;top:1230px;width:6px;height:34px;border-right:0;padding:0"></div>
<div class="c wh" style="left:1148px;top:1230px;width:6px;height:34px;border-right:0;padding:0"></div>
<div class="c wh" style="left:1208px;top:1230px;width:6px;height:34px;border-right:0;padding:0"></div>
<div class="c wh" style="left:1266px;top:1230px;width:6px;height:34px;border-right:0;padding:0"></div>
<div class="c wh" style="left:1326px;top:1230px;width:6px;height:34px;border-right:0;padding:0"></div>
<div class="c wh" style="left:1386px;top:1230px;width:6px;height:34px;border-right:0;padding:0"></div>
<div class="c wh" style="left:1446px;top:1230px;width:6px;height:34px;border-right:0;padding:0"></div>
<div class="c wh" style="left:1506px;top:1230px;width:6px;height:34px;border-right:0;padding:0"></div>
<div class="c wh" style="left:1566px;top:1230px;width:6px;height:34px;border-right:0;padding:0"></div>
<div class="c wh" style="left:1626px;top:1230px;width:6px;height:34px;border-right:0;padding:0"></div>
<div class="c wh" style="left:1806px;top:1230px;width:6px;height:34px;border-right:0;padding:0"></div>
<div class="c wh" style="left:1866px;top:1230px;width:6px;height:34px;border-right:0;padding:0"></div>
<div class="c wh" style="left:1926px;top:1230px;width:6px;height:34px;border-right:0;padding:0"></div>
<div class="c wh" style="left:1986px;top:1230px;width:6px;height:34px;border-right:0;padding:0"></div>
<div class="c wh" style="left:2046px;top:1230px;width:6px;height:34px;border-right:0;padding:0"></div>
<div class="c wh" style="left:2104px;top:1230px;width:6px;height:34px;border-right:0;padding:0"></div>
<div class="c wh" style="left:2164px;top:1230px;width:6px;height:34px;border-right:0;padding:0"></div>
<div class="c wh" style="left:428px;top:1268px;width:46px;height:34px;">Odd</div>
<div class="c wh" style="left:728px;top:1268px;width:60px;height:34px;">Odd F</div>
<div class="c wh" style="left:1208px;top:1268px;width:58px;height:34px;">Odd F</div>
<div class="c wh" style="left:1446px;top:1268px;width:60px;height:34px;">Odd F</div>
<div class="c wh" style="left:1566px;top:1268px;width:60px;height:34px;">Odd F</div>
<div class="c wh" style="left:1446px;top:1306px;width:120px;height:34px;"><i class="wl"></i>UFD4_128_I</div>
<div class="c wh" style="left:1566px;top:1306px;width:106px;height:34px;"><i class="wl"></i><i class="wr"></i>UFD4_128</div>
<div class="c wh" style="left:1446px;top:1344px;width:226px;height:34px;"><i class="wl"></i><i class="wr"></i>EvoSounds House Uplif</div>
<div class="c wh" style="left:1208px;top:1382px;width:118px;height:8px;;padding:0"></div>
<div class="c wh" style="left:1326px;top:1382px;width:120px;height:8px;;padding:0"></div>
<div class="c wh" style="left:1446px;top:1382px;width:120px;height:8px;;padding:0"></div>
<div class="c wh" style="left:1566px;top:1382px;width:106px;height:8px;;padding:0"></div>
<div class="hd k" style="top:104px;height:34px"><svg width="26" height="26" viewBox="0 0 26 26"><circle cx="13" cy="13" r="11.9" fill="none" stroke="#d2d2d2" stroke-width="1.9"/><path d="M10.2 6.6L19.6 13L10.2 19.6Z" fill="#d2d2d2"/></svg><span>KICK</span></div>
<div class="hd hpk" style="top:142px;height:34px"><svg width="26" height="26" viewBox="0 0 26 26"><circle cx="13" cy="13" r="11.9" fill="none" stroke="#f4d4e1" stroke-width="1.9"/><path d="M10.2 6.6L19.6 13L10.2 19.6Z" fill="#f4d4e1"/></svg><span>VOCAL</span></div>
<div class="hd hpk" style="top:180px;height:34px"><svg width="26" height="26" viewBox="0 0 26 26"><circle cx="13" cy="13" r="11.9" fill="none" stroke="#f4d4e1" stroke-width="1.9"/><path d="M10.2 6.6L19.6 13L10.2 19.6Z" fill="#f4d4e1"/></svg><span>VOCAL 2</span></div>
<div class="hd hpk" style="top:218px;height:34px"><svg width="26" height="26" viewBox="0 0 26 26"><circle cx="13" cy="13" r="11.9" fill="none" stroke="#f4d4e1" stroke-width="1.9"/><path d="M10.2 6.6L19.6 13L10.2 19.6Z" fill="#f4d4e1"/></svg><span>VOCAL REV</span></div>
<div class="hd hpk" style="top:256px;height:34px"><svg width="26" height="26" viewBox="0 0 26 26"><circle cx="13" cy="13" r="11.9" fill="none" stroke="#f4d4e1" stroke-width="1.9"/><path d="M10.2 6.6L19.6 13L10.2 19.6Z" fill="#f4d4e1"/></svg><span>VOCAL REVER</span></div>
<div class="hd hbl" style="top:294px;height:70px"><svg width="26" height="26" viewBox="0 0 26 26"><circle cx="13" cy="13" r="11.9" fill="none" stroke="#c9ccee" stroke-width="1.9"/><path d="M6.6 9.8L19.4 9.8L13 19Z" fill="#c9ccee"/></svg><span>LFO</span></div>
<div class="hd hbl" style="top:368px;height:70px"><svg width="26" height="26" viewBox="0 0 26 26"><circle cx="13" cy="13" r="11.9" fill="none" stroke="#c9ccee" stroke-width="1.9"/><path d="M6.6 9.8L19.4 9.8L13 19Z" fill="#c9ccee"/></svg><span>BOOM</span></div>
<div class="hd hbl" style="top:442px;height:34px"><svg width="26" height="26" viewBox="0 0 26 26"><circle cx="13" cy="13" r="11.9" fill="none" stroke="#c9ccee" stroke-width="1.9"/><path d="M10.2 6.6L19.6 13L10.2 19.6Z" fill="#c9ccee"/></svg><span>STAB</span></div>
<div class="hd hbl" style="top:480px;height:70px"><svg width="26" height="26" viewBox="0 0 26 26"><circle cx="13" cy="13" r="11.9" fill="none" stroke="#c9ccee" stroke-width="1.9"/><path d="M6.6 9.8L19.4 9.8L13 19Z" fill="#c9ccee"/></svg><span>LEAD 2 DROP</span></div>
<div class="hd hbl" style="top:554px;height:70px"><svg width="26" height="26" viewBox="0 0 26 26"><circle cx="13" cy="13" r="11.9" fill="none" stroke="#c9ccee" stroke-width="1.9"/><path d="M6.6 9.8L19.4 9.8L13 19Z" fill="#c9ccee"/></svg><span>FX 2 DROP</span></div>
<div class="hd hbl" style="top:628px;height:70px"><svg width="26" height="26" viewBox="0 0 26 26"><circle cx="13" cy="13" r="11.9" fill="none" stroke="#c9ccee" stroke-width="1.9"/><path d="M6.6 9.8L19.4 9.8L13 19Z" fill="#c9ccee"/></svg><span>FX 2 2DROP</span></div>
<div class="hd hbl" style="top:702px;height:70px"><svg width="26" height="26" viewBox="0 0 26 26"><circle cx="13" cy="13" r="11.9" fill="none" stroke="#c9ccee" stroke-width="1.9"/><path d="M6.6 9.8L19.4 9.8L13 19Z" fill="#c9ccee"/></svg><span>GUITAR</span></div>
<div class="hd hrd" style="top:776px;height:70px"><svg width="26" height="26" viewBox="0 0 26 26"><circle cx="13" cy="13" r="11.9" fill="none" stroke="#4a0f0c" stroke-width="1.9"/><path d="M6.6 9.8L19.4 9.8L13 19Z" fill="#4a0f0c"/></svg><span>BASS</span></div>
<div class="hd hgr" style="top:850px;height:34px"><svg width="26" height="26" viewBox="0 0 26 26"><circle cx="13" cy="13" r="11.9" fill="none" stroke="#143d0c" stroke-width="1.9"/><path d="M10.2 6.6L19.6 13L10.2 19.6Z" fill="#143d0c"/></svg><span>CLAP</span></div>
<div class="hd hgr" style="top:888px;height:34px"><svg width="26" height="26" viewBox="0 0 26 26"><circle cx="13" cy="13" r="11.9" fill="none" stroke="#143d0c" stroke-width="1.9"/><path d="M10.2 6.6L19.6 13L10.2 19.6Z" fill="#143d0c"/></svg><span>TOP</span></div>
<div class="hd hgr" style="top:926px;height:34px"><svg width="26" height="26" viewBox="0 0 26 26"><circle cx="13" cy="13" r="11.9" fill="none" stroke="#143d0c" stroke-width="1.9"/><path d="M10.2 6.6L19.6 13L10.2 19.6Z" fill="#143d0c"/></svg><span>HAT</span></div>
<div class="hd hgr" style="top:964px;height:34px"><svg width="26" height="26" viewBox="0 0 26 26"><circle cx="13" cy="13" r="11.9" fill="none" stroke="#143d0c" stroke-width="1.9"/><path d="M10.2 6.6L19.6 13L10.2 19.6Z" fill="#143d0c"/></svg><span>SHAKER</span></div>
<div class="hd hgr" style="top:1002px;height:34px"><svg width="26" height="26" viewBox="0 0 26 26"><circle cx="13" cy="13" r="11.9" fill="none" stroke="#143d0c" stroke-width="1.9"/><path d="M10.2 6.6L19.6 13L10.2 19.6Z" fill="#143d0c"/></svg><span>SNARE</span></div>
<div class="hd hgr" style="top:1040px;height:34px"><svg width="26" height="26" viewBox="0 0 26 26"><circle cx="13" cy="13" r="11.9" fill="none" stroke="#143d0c" stroke-width="1.9"/><path d="M10.2 6.6L19.6 13L10.2 19.6Z" fill="#143d0c"/></svg><span>FILL</span></div>
<div class="hd hgr" style="top:1078px;height:34px"><svg width="26" height="26" viewBox="0 0 26 26"><circle cx="13" cy="13" r="11.9" fill="none" stroke="#143d0c" stroke-width="1.9"/><path d="M10.2 6.6L19.6 13L10.2 19.6Z" fill="#143d0c"/></svg><span>SNARE ROLL</span></div>
<div class="hd hgr" style="top:1116px;height:34px"><svg width="26" height="26" viewBox="0 0 26 26"><circle cx="13" cy="13" r="11.9" fill="none" stroke="#143d0c" stroke-width="1.9"/><path d="M10.2 6.6L19.6 13L10.2 19.6Z" fill="#143d0c"/></svg><span>SNARE BUILD</span></div>
<div class="hd hgr" style="top:1154px;height:34px"><svg width="26" height="26" viewBox="0 0 26 26"><circle cx="13" cy="13" r="11.9" fill="none" stroke="#143d0c" stroke-width="1.9"/><path d="M10.2 6.6L19.6 13L10.2 19.6Z" fill="#143d0c"/></svg><span>CRASH</span></div>
<div class="hd hgr" style="top:1192px;height:34px"><svg width="26" height="26" viewBox="0 0 26 26"><circle cx="13" cy="13" r="11.9" fill="none" stroke="#143d0c" stroke-width="1.9"/><path d="M10.2 6.6L19.6 13L10.2 19.6Z" fill="#143d0c"/></svg><span>RIDE</span></div>
<div class="hd hwh" style="top:1230px;height:34px"><svg width="26" height="26" viewBox="0 0 26 26"><circle cx="13" cy="13" r="11.9" fill="none" stroke="#3a3a3a" stroke-width="1.9"/><path d="M10.2 6.6L19.6 13L10.2 19.6Z" fill="#3a3a3a"/></svg><span>VOCAL IMPAC</span></div>
<div class="hd hwh" style="top:1268px;height:34px"><svg width="26" height="26" viewBox="0 0 26 26"><circle cx="13" cy="13" r="11.9" fill="none" stroke="#3a3a3a" stroke-width="1.9"/><path d="M10.2 6.6L19.6 13L10.2 19.6Z" fill="#3a3a3a"/></svg><span>FX FALLING</span></div>
<div class="hd hwh" style="top:1306px;height:34px"><svg width="26" height="26" viewBox="0 0 26 26"><circle cx="13" cy="13" r="11.9" fill="none" stroke="#3a3a3a" stroke-width="1.9"/><path d="M10.2 6.6L19.6 13L10.2 19.6Z" fill="#3a3a3a"/></svg><span>RISER TONAL</span></div>
<div class="hd hwh" style="top:1344px;height:34px"><svg width="26" height="26" viewBox="0 0 26 26"><circle cx="13" cy="13" r="11.9" fill="none" stroke="#3a3a3a" stroke-width="1.9"/><path d="M10.2 6.6L19.6 13L10.2 19.6Z" fill="#3a3a3a"/></svg><span>UPLIFTER</span></div>
<div class="hd hwh" style="top:1382px;height:8px"><svg width="26" height="26" viewBox="0 0 26 26"><circle cx="13" cy="13" r="11.9" fill="none" stroke="#3a3a3a" stroke-width="1.9"/><path d="M10.2 6.6L19.6 13L10.2 19.6Z" fill="#3a3a3a"/></svg><span></span></div>
<div class="hd" style="top:1396px;height:34px;background:#b5dde9;color:#0c0c0c;padding-left:43px;font-weight:bold;font-size:20.5px"><svg width="26" height="26" viewBox="0 0 26 26"><circle cx="13" cy="13" r="11.9" fill="none" stroke="#0c0c0c" stroke-width="1.9"/><path d="M10.2 6.6L19.6 13L10.2 19.6Z" fill="#0c0c0c"/></svg><span>Main</span></div>
<div class="tk2" style="left:10px;top:44px;width:2px;height:12px"></div>
<div class="tk2" style="left:10px;top:44px;width:4px;height:2px"></div>
<div class="tk2" style="left:70px;top:54px;width:2px;height:2px"></div>
<div class="rl" style="left:19.8px">1</div>
<div class="tk2" style="left:130px;top:44px;width:2px;height:12px"></div>
<div class="tk2" style="left:130px;top:44px;width:4px;height:2px"></div>
<div class="tk2" style="left:190px;top:54px;width:2px;height:2px"></div>
<div class="rl" style="left:139.8px">9</div>
<div class="tk2" style="left:250px;top:44px;width:2px;height:12px"></div>
<div class="tk2" style="left:250px;top:44px;width:4px;height:2px"></div>
<div class="tk2" style="left:310px;top:54px;width:2px;height:2px"></div>
<div class="rl" style="left:259.8px">17</div>
<div class="tk2" style="left:370px;top:44px;width:2px;height:12px"></div>
<div class="tk2" style="left:370px;top:44px;width:4px;height:2px"></div>
<div class="tk2" style="left:428px;top:54px;width:2px;height:2px"></div>
<div class="rl" style="left:379.8px">25</div>
<div class="tk2" style="left:488px;top:44px;width:2px;height:12px"></div>
<div class="tk2" style="left:488px;top:44px;width:4px;height:2px"></div>
<div class="tk2" style="left:548px;top:54px;width:2px;height:2px"></div>
<div class="rl" style="left:497.8px">33</div>
<div class="tk2" style="left:608px;top:44px;width:2px;height:12px"></div>
<div class="tk2" style="left:608px;top:44px;width:4px;height:2px"></div>
<div class="tk2" style="left:668px;top:54px;width:2px;height:2px"></div>
<div class="rl" style="left:617.8px">41</div>
<div class="tk2" style="left:728px;top:44px;width:2px;height:12px"></div>
<div class="tk2" style="left:728px;top:44px;width:4px;height:2px"></div>
<div class="tk2" style="left:788px;top:54px;width:2px;height:2px"></div>
<div class="rl" style="left:737.8px">49</div>
<div class="tk2" style="left:848px;top:44px;width:2px;height:12px"></div>
<div class="tk2" style="left:848px;top:44px;width:4px;height:2px"></div>
<div class="tk2" style="left:908px;top:54px;width:2px;height:2px"></div>
<div class="rl" style="left:857.8px">57</div>
<div class="tk2" style="left:968px;top:44px;width:2px;height:12px"></div>
<div class="tk2" style="left:968px;top:44px;width:4px;height:2px"></div>
<div class="tk2" style="left:1028px;top:54px;width:2px;height:2px"></div>
<div class="rl" style="left:977.8px">65</div>
<div class="tk2" style="left:1088px;top:44px;width:2px;height:12px"></div>
<div class="tk2" style="left:1088px;top:44px;width:4px;height:2px"></div>
<div class="tk2" style="left:1148px;top:54px;width:2px;height:2px"></div>
<div class="rl" style="left:1097.8px">73</div>
<div class="tk2" style="left:1208px;top:44px;width:2px;height:12px"></div>
<div class="tk2" style="left:1208px;top:44px;width:4px;height:2px"></div>
<div class="tk2" style="left:1266px;top:54px;width:2px;height:2px"></div>
<div class="rl" style="left:1217.8px">81</div>
<div class="tk2" style="left:1326px;top:44px;width:2px;height:12px"></div>
<div class="tk2" style="left:1326px;top:44px;width:4px;height:2px"></div>
<div class="tk2" style="left:1386px;top:54px;width:2px;height:2px"></div>
<div class="rl" style="left:1335.8px">89</div>
<div class="tk2" style="left:1446px;top:44px;width:2px;height:12px"></div>
<div class="tk2" style="left:1446px;top:44px;width:4px;height:2px"></div>
<div class="tk2" style="left:1506px;top:54px;width:2px;height:2px"></div>
<div class="rl" style="left:1455.8px">97</div>
<div class="tk2" style="left:1566px;top:44px;width:2px;height:12px"></div>
<div class="tk2" style="left:1566px;top:44px;width:4px;height:2px"></div>
<div class="tk2" style="left:1626px;top:54px;width:2px;height:2px"></div>
<div class="rl" style="left:1575.8px">105</div>
<div class="tk2" style="left:1686px;top:44px;width:2px;height:12px"></div>
<div class="tk2" style="left:1686px;top:44px;width:4px;height:2px"></div>
<div class="tk2" style="left:1746px;top:54px;width:2px;height:2px"></div>
<div class="rl" style="left:1695.8px">113</div>
<div class="tk2" style="left:1806px;top:44px;width:2px;height:12px"></div>
<div class="tk2" style="left:1806px;top:44px;width:4px;height:2px"></div>
<div class="tk2" style="left:1866px;top:54px;width:2px;height:2px"></div>
<div class="rl" style="left:1815.8px">121</div>
<div class="tk2" style="left:1926px;top:44px;width:2px;height:12px"></div>
<div class="tk2" style="left:1926px;top:44px;width:4px;height:2px"></div>
<div class="tk2" style="left:1986px;top:54px;width:2px;height:2px"></div>
<div class="rl" style="left:1935.8px">129</div>
<div class="tk2" style="left:2046px;top:44px;width:2px;height:12px"></div>
<div class="tk2" style="left:2046px;top:44px;width:4px;height:2px"></div>
<div class="tk2" style="left:2104px;top:54px;width:2px;height:2px"></div>
<div class="rl" style="left:2055.8px">137</div>
<div class="tk2" style="left:2164px;top:44px;width:2px;height:12px"></div>
<div class="tk2" style="left:2164px;top:44px;width:4px;height:2px"></div>
<div class="tk2" style="left:2224px;top:54px;width:2px;height:2px"></div>
<div class="rl" style="left:2173.8px">145</div>
<div class="tk2" style="left:2284px;top:44px;width:2px;height:12px"></div>
<div class="tk2" style="left:2284px;top:44px;width:4px;height:2px"></div>
<div class="tk2" style="left:2344px;top:54px;width:2px;height:2px"></div>
<div class="rl" style="left:2293.8px">153</div>
<div class="tk2" style="left:2404px;top:44px;width:2px;height:12px"></div>
<div class="tk" style="left:2404px;top:56px;width:2px;height:22px"></div>
<div class="tk" style="left:10px;top:56px;width:2396px;height:2px"></div>
<div class="tk" style="left:10px;top:76px;width:2396px;height:2px"></div>
<svg style="left:10px;top:56px" width="20" height="22" viewBox="0 0 20 22"><path d="M1.6 2.4L16.5 11L1.6 19.6Z" fill="none" stroke="#a1a1a1" stroke-width="1.7"/></svg>
<svg style="left:2386px;top:56px" width="20" height="22" viewBox="0 0 20 22"><path d="M18.2 2.4L3.3 11L18.2 19.6Z" fill="none" stroke="#a1a1a1" stroke-width="1.8"/></svg>
<svg style="left:2337px;top:91px" width="16" height="10" viewBox="0 0 16 10"><path d="M1 1L15 1L8 9Z" fill="#44bcd6"/></svg>
<svg style="left:2337px;top:1435px" width="16" height="10" viewBox="0 0 16 10"><path d="M1 9L15 9L8 1Z" fill="#44bcd6"/></svg>
<div style="left:2344.3px;top:1396px;width:2px;height:34px;background:#fff"></div>
<div style="left:2362px;top:1391.5px;font-size:34px;line-height:40px;font-weight:bold;color:#7c7c7c;letter-spacing:2.2px">8/1</div>
<div class="tk2" style="left:10px;top:1434px;width:2px;height:16px"></div>
<div class="tk2" style="left:10px;top:1448px;width:4px;height:2px"></div>
<div class="tl" style="left:16px">0:00</div>
<div class="tk2" style="left:50px;top:1434px;width:2px;height:4px"></div>
<div class="tk2" style="left:90px;top:1434px;width:2px;height:4px"></div>
<div class="tk2" style="left:130px;top:1434px;width:2px;height:4px"></div>
<div class="tk2" style="left:170px;top:1434px;width:2px;height:16px"></div>
<div class="tk2" style="left:170px;top:1448px;width:4px;height:2px"></div>
<div class="tl" style="left:176px">0:20</div>
<div class="tk2" style="left:210px;top:1434px;width:2px;height:4px"></div>
<div class="tk2" style="left:250px;top:1434px;width:2px;height:4px"></div>
<div class="tk2" style="left:290px;top:1434px;width:2px;height:4px"></div>
<div class="tk2" style="left:330px;top:1434px;width:2px;height:16px"></div>
<div class="tk2" style="left:330px;top:1448px;width:4px;height:2px"></div>
<div class="tl" style="left:336px">0:40</div>
<div class="tk2" style="left:370px;top:1434px;width:2px;height:4px"></div>
<div class="tk2" style="left:410px;top:1434px;width:2px;height:4px"></div>
<div class="tk2" style="left:448px;top:1434px;width:2px;height:4px"></div>
<div class="tk2" style="left:488px;top:1434px;width:2px;height:16px"></div>
<div class="tk2" style="left:488px;top:1448px;width:4px;height:2px"></div>
<div class="tl" style="left:494px">1:00</div>
<div class="tk2" style="left:528px;top:1434px;width:2px;height:4px"></div>
<div class="tk2" style="left:568px;top:1434px;width:2px;height:4px"></div>
<div class="tk2" style="left:608px;top:1434px;width:2px;height:4px"></div>
<div class="tk2" style="left:648px;top:1434px;width:2px;height:16px"></div>
<div class="tk2" style="left:648px;top:1448px;width:4px;height:2px"></div>
<div class="tl" style="left:654px">1:20</div>
<div class="tk2" style="left:688px;top:1434px;width:2px;height:4px"></div>
<div class="tk2" style="left:728px;top:1434px;width:2px;height:4px"></div>
<div class="tk2" style="left:768px;top:1434px;width:2px;height:4px"></div>
<div class="tk2" style="left:808px;top:1434px;width:2px;height:16px"></div>
<div class="tk2" style="left:808px;top:1448px;width:4px;height:2px"></div>
<div class="tl" style="left:814px">1:40</div>
<div class="tk2" style="left:848px;top:1434px;width:2px;height:4px"></div>
<div class="tk2" style="left:888px;top:1434px;width:2px;height:4px"></div>
<div class="tk2" style="left:928px;top:1434px;width:2px;height:4px"></div>
<div class="tk2" style="left:968px;top:1434px;width:2px;height:16px"></div>
<div class="tk2" style="left:968px;top:1448px;width:4px;height:2px"></div>
<div class="tl" style="left:974px">2:00</div>
<div class="tk2" style="left:1008px;top:1434px;width:2px;height:4px"></div>
<div class="tk2" style="left:1048px;top:1434px;width:2px;height:4px"></div>
<div class="tk2" style="left:1088px;top:1434px;width:2px;height:4px"></div>
<div class="tk2" style="left:1128px;top:1434px;width:2px;height:16px"></div>
<div class="tk2" style="left:1128px;top:1448px;width:4px;height:2px"></div>
<div class="tl" style="left:1134px">2:20</div>
<div class="tk2" style="left:1168px;top:1434px;width:2px;height:4px"></div>
<div class="tk2" style="left:1208px;top:1434px;width:2px;height:4px"></div>
<div class="tk2" style="left:1248px;top:1434px;width:2px;height:4px"></div>
<div class="tk2" style="left:1286px;top:1434px;width:2px;height:16px"></div>
<div class="tk2" style="left:1286px;top:1448px;width:4px;height:2px"></div>
<div class="tl" style="left:1292px">2:40</div>
<div class="tk2" style="left:1326px;top:1434px;width:2px;height:4px"></div>
<div class="tk2" style="left:1366px;top:1434px;width:2px;height:4px"></div>
<div class="tk2" style="left:1406px;top:1434px;width:2px;height:4px"></div>
<div class="tk2" style="left:1446px;top:1434px;width:2px;height:16px"></div>
<div class="tk2" style="left:1446px;top:1448px;width:4px;height:2px"></div>
<div class="tl" style="left:1452px">3:00</div>
<div class="tk2" style="left:1486px;top:1434px;width:2px;height:4px"></div>
<div class="tk2" style="left:1526px;top:1434px;width:2px;height:4px"></div>
<div class="tk2" style="left:1566px;top:1434px;width:2px;height:4px"></div>
<div class="tk2" style="left:1606px;top:1434px;width:2px;height:16px"></div>
<div class="tk2" style="left:1606px;top:1448px;width:4px;height:2px"></div>
<div class="tl" style="left:1612px">3:20</div>
<div class="tk2" style="left:1646px;top:1434px;width:2px;height:4px"></div>
<div class="tk2" style="left:1686px;top:1434px;width:2px;height:4px"></div>
<div class="tk2" style="left:1726px;top:1434px;width:2px;height:4px"></div>
<div class="tk2" style="left:1766px;top:1434px;width:2px;height:16px"></div>
<div class="tk2" style="left:1766px;top:1448px;width:4px;height:2px"></div>
<div class="tl" style="left:1772px">3:40</div>
<div class="tk2" style="left:1806px;top:1434px;width:2px;height:4px"></div>
<div class="tk2" style="left:1846px;top:1434px;width:2px;height:4px"></div>
<div class="tk2" style="left:1886px;top:1434px;width:2px;height:4px"></div>
<div class="tk2" style="left:1926px;top:1434px;width:2px;height:16px"></div>
<div class="tk2" style="left:1926px;top:1448px;width:4px;height:2px"></div>
<div class="tl" style="left:1932px">4:00</div>
<div class="tk2" style="left:1966px;top:1434px;width:2px;height:4px"></div>
<div class="tk2" style="left:2006px;top:1434px;width:2px;height:4px"></div>
<div class="tk2" style="left:2046px;top:1434px;width:2px;height:4px"></div>
<div class="tk2" style="left:2086px;top:1434px;width:2px;height:16px"></div>
<div class="tk2" style="left:2086px;top:1448px;width:4px;height:2px"></div>
<div class="tl" style="left:2092px">4:20</div>
<div class="tk2" style="left:2124px;top:1434px;width:2px;height:4px"></div>
<div class="tk2" style="left:2164px;top:1434px;width:2px;height:4px"></div>
<div class="tk2" style="left:2204px;top:1434px;width:2px;height:4px"></div>
<div class="tk2" style="left:2244px;top:1434px;width:2px;height:16px"></div>
<div class="tk2" style="left:2244px;top:1448px;width:4px;height:2px"></div>
<div class="tl" style="left:2250px">4:40</div>
<div class="tk2" style="left:2284px;top:1434px;width:2px;height:4px"></div>
<div class="tk2" style="left:2324px;top:1434px;width:2px;height:4px"></div>
<div class="tk2" style="left:2364px;top:1434px;width:2px;height:4px"></div>
<div class="tk2" style="left:2404px;top:1434px;width:2px;height:6px"></div>
<div style="left:2432px;top:30px;width:58px;height:26px;border-radius:13px;background:#1c1c1c;color:#c9c9c9;font-size:21px;line-height:26px;text-align:center;letter-spacing:.6px;-webkit-text-stroke:.4px #c9c9c9">Set</div>
<div style="left:2512px;top:30px;width:46px;height:26px;background:#1e1e1e;box-sizing:border-box;border:1.5px solid #141414"></div>
<svg style="left:2512px;top:30px" width="46" height="26" viewBox="0 0 46 26"><path d="M19.5 17.5L28 8.5" stroke="#c4c4c4" stroke-width="2.2"/><circle cx="19.3" cy="17.7" r="3" fill="#c4c4c4"/><circle cx="28.2" cy="8.4" r="3" fill="#c4c4c4"/></svg>
<div style="left:2566px;top:30px;width:46px;height:26px;background:#dd714e;box-sizing:border-box;border:2px solid #121212"></div>
<svg style="left:2566px;top:30px" width="46" height="26" viewBox="0 0 46 26"><rect x="16" y="12" width="14" height="8" fill="#050505"/><path d="M18.7 12.5V10.2a4.3 4.3 0 0 1 8.6 0V12.5" fill="none" stroke="#050505" stroke-width="2.2"/></svg>
<svg style="left:2432px;top:66px" width="26" height="26" viewBox="0 0 26 26"><circle cx="13" cy="13" r="12.8" fill="#1c1c1c"/><path d="M5.8 13L13.8 6.8L13.8 12L19.8 12L19.8 14L13.8 14L13.8 19.2Z" fill="#bdbdbd"/></svg>
<svg style="left:2464px;top:66px" width="26" height="26" viewBox="0 0 26 26"><circle cx="13" cy="13" r="12.8" fill="#1c1c1c"/><path d="M20.2 13L12.2 6.8L12.2 12L6.2 12L6.2 14L12.2 14L12.2 19.2Z" fill="#bdbdbd"/></svg>
<div style="left:2426px;top:1444px;width:30px;height:23px;background:#f0ad5c;box-sizing:border-box;border:1.5px solid #1e1e1e"></div>
<svg style="left:2426px;top:1444px" width="30" height="23" viewBox="0 0 30 23"><g stroke="#0a0a0a" stroke-width="1.7"><path d="M7 9.5v4M11 6v11M15 3.5v16M19 6v11M23 9.5v4"/></g></svg>
<div style="left:2462px;top:1444px;width:70px;height:23px;background:#1e1e1e;box-sizing:border-box;border:1.5px solid #141414"></div>
<div style="left:2464px;top:1446px;width:20px;height:19.5px;background:#2f6f85"></div>
<div style="left:2471px;top:1443.5px;font-size:20.5px;line-height:24px;color:#b9b9b9;letter-spacing:.5px">1.00x</div>
<div style="left:2544px;top:1444px;width:30px;height:23px;background:#1e1e1e;box-sizing:border-box;border:1.5px solid #141414;color:#c0c0c0;font-size:20px;line-height:20.5px;text-align:center">H</div>
<div style="left:2580px;top:1444px;width:30px;height:23px;background:#f0ad5c;box-sizing:border-box;border:1.5px solid #1e1e1e;color:#0a0a0a;font-size:20px;line-height:20.5px;text-align:center">W</div>
</div></body></html>
